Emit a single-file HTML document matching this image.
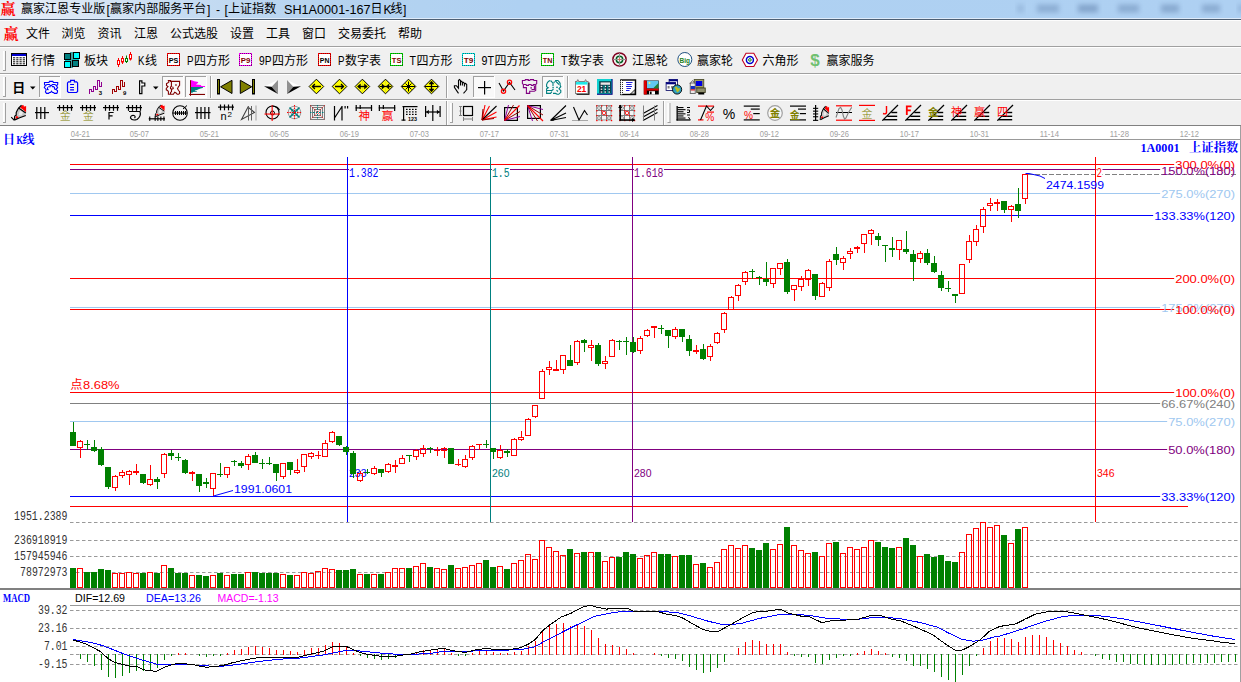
<!DOCTYPE html>
<html><head><meta charset="utf-8"><title>chart</title>
<style>
html,body{margin:0;padding:0;background:#f0f0f0;overflow:hidden}
body{width:1241px;height:682px;position:relative;font-family:"Liberation Sans",sans-serif}
svg text{white-space:pre}
</style></head><body>
<svg id="titlebar" width="1241" height="21" viewBox="0 0 1241 21" style="position:absolute;left:0;top:0"><defs><linearGradient id="tg" x1="0" x2="1" y1="0" y2="0"><stop offset="0" stop-color="#e8eff8"/><stop offset="0.06" stop-color="#dbe7f5"/><stop offset="0.15" stop-color="#c6dcf2"/><stop offset="0.26" stop-color="#b5d3f0"/><stop offset="0.42" stop-color="#afd1f2"/><stop offset="1" stop-color="#aed0f2"/></linearGradient><filter id="blur" x="-20%" y="-50%" width="140%" height="200%"><feGaussianBlur stdDeviation="2.6"/></filter></defs><rect x="0" y="0" width="1241" height="19" fill="url(#tg)"/><rect x="1017" y="4.5" width="7" height="8" fill="#5a7aa6" opacity="0.25" filter="url(#blur)"/><rect x="1037" y="4.5" width="22" height="8" fill="#5a7aa6" opacity="0.4" filter="url(#blur)"/><rect x="1078" y="4.5" width="20" height="8" fill="#5a7aa6" opacity="0.5" filter="url(#blur)"/><rect x="1118" y="4.5" width="21" height="8" fill="#5a7aa6" opacity="0.42" filter="url(#blur)"/><rect x="1161" y="4.5" width="18" height="8" fill="#5a7aa6" opacity="0.45" filter="url(#blur)"/><rect x="1202" y="4.5" width="18" height="8" fill="#5a7aa6" opacity="0.42" filter="url(#blur)"/><rect x="1238" y="4.5" width="6" height="8" fill="#5a7aa6" opacity="0.3" filter="url(#blur)"/><rect x="0" y="18" width="1241" height="1" fill="#deebfa"/><rect x="0" y="19" width="1241" height="1" fill="#4e5f73"/><rect x="0" y="20" width="1241" height="1" fill="#fdfdfd"/><text x="0.5" y="14" font-size="15" fill="#ff0000" text-anchor="start" font-family="Liberation Serif, Noto Serif CJK SC, serif" font-weight="bold">赢</text><text x="21" y="13.4" font-size="12" fill="#000" text-anchor="start" font-family="Liberation Sans, Noto Sans CJK SC, sans-serif" textLength="84.3" lengthAdjust="spacingAndGlyphs">赢家江恩专业版</text><text x="106.5" y="13.5" font-size="12.2" fill="#000" text-anchor="start" font-family="Liberation Sans, sans-serif">[</text><text x="110" y="13.4" font-size="12" fill="#000" text-anchor="start" font-family="Liberation Sans, Noto Sans CJK SC, sans-serif" textLength="96.4" lengthAdjust="spacingAndGlyphs">赢家内部服务平台</text><text x="207" y="13.5" font-size="12.2" fill="#000" text-anchor="start" font-family="Liberation Sans, sans-serif">]</text><text x="216" y="13.5" font-size="12.2" fill="#000" text-anchor="start" font-family="Liberation Sans, sans-serif">-</text><text x="224.5" y="13.5" font-size="12.2" fill="#000" text-anchor="start" font-family="Liberation Sans, sans-serif">[</text><text x="228" y="13.4" font-size="12" fill="#000" text-anchor="start" font-family="Liberation Sans, Noto Sans CJK SC, sans-serif" textLength="48.2" lengthAdjust="spacingAndGlyphs">上证指数</text><text x="284" y="13.5" font-size="12.2" fill="#000" text-anchor="start" font-family="Liberation Sans, sans-serif" textLength="86.5" lengthAdjust="spacingAndGlyphs">SH1A0001-167</text><text x="370.5" y="13.4" font-size="12" fill="#000" text-anchor="start" font-family="Liberation Sans, Noto Sans CJK SC, sans-serif">日</text><text x="383.5" y="13.5" font-size="12.2" fill="#000" text-anchor="start" font-family="Liberation Sans, sans-serif">K</text><text x="390.5" y="13.4" font-size="12" fill="#000" text-anchor="start" font-family="Liberation Sans, Noto Sans CJK SC, sans-serif">线</text><text x="403" y="13.5" font-size="12.2" fill="#000" text-anchor="start" font-family="Liberation Sans, sans-serif">]</text></svg><svg id="menubar" width="1241" height="27" viewBox="0 21 1241 27" style="position:absolute;left:0;top:21px"><rect x="0" y="21" width="1241" height="25" fill="#f0f0f0"/><rect x="0" y="46" width="1241" height="1" fill="#a0a0a0"/><rect x="0" y="47" width="1241" height="1" fill="#fff"/><text x="3.5" y="38.8" font-size="15" fill="#ff0000" text-anchor="start" font-family="Liberation Serif, Noto Serif CJK SC, serif" font-weight="bold">赢</text><text x="26" y="38.2" font-size="12" fill="#000" text-anchor="start" font-family="Liberation Sans, Noto Sans CJK SC, sans-serif" textLength="24" lengthAdjust="spacingAndGlyphs">文件</text><text x="61.5" y="38.2" font-size="12" fill="#000" text-anchor="start" font-family="Liberation Sans, Noto Sans CJK SC, sans-serif" textLength="24" lengthAdjust="spacingAndGlyphs">浏览</text><text x="97.5" y="38.2" font-size="12" fill="#000" text-anchor="start" font-family="Liberation Sans, Noto Sans CJK SC, sans-serif" textLength="24" lengthAdjust="spacingAndGlyphs">资讯</text><text x="134" y="38.2" font-size="12" fill="#000" text-anchor="start" font-family="Liberation Sans, Noto Sans CJK SC, sans-serif" textLength="24" lengthAdjust="spacingAndGlyphs">江恩</text><text x="170" y="38.2" font-size="12" fill="#000" text-anchor="start" font-family="Liberation Sans, Noto Sans CJK SC, sans-serif" textLength="48" lengthAdjust="spacingAndGlyphs">公式选股</text><text x="230" y="38.2" font-size="12" fill="#000" text-anchor="start" font-family="Liberation Sans, Noto Sans CJK SC, sans-serif" textLength="24" lengthAdjust="spacingAndGlyphs">设置</text><text x="266" y="38.2" font-size="12" fill="#000" text-anchor="start" font-family="Liberation Sans, Noto Sans CJK SC, sans-serif" textLength="24" lengthAdjust="spacingAndGlyphs">工具</text><text x="302" y="38.2" font-size="12" fill="#000" text-anchor="start" font-family="Liberation Sans, Noto Sans CJK SC, sans-serif" textLength="24" lengthAdjust="spacingAndGlyphs">窗口</text><text x="338" y="38.2" font-size="12" fill="#000" text-anchor="start" font-family="Liberation Sans, Noto Sans CJK SC, sans-serif" textLength="48" lengthAdjust="spacingAndGlyphs">交易委托</text><text x="398" y="38.2" font-size="12" fill="#000" text-anchor="start" font-family="Liberation Sans, Noto Sans CJK SC, sans-serif" textLength="24" lengthAdjust="spacingAndGlyphs">帮助</text></svg><svg id="toolbar1" width="1241" height="27" viewBox="0 48 1241 27" style="position:absolute;left:0;top:48px"><rect x="0" y="48" width="1241" height="25" fill="#f0f0f0"/><rect x="0" y="73" width="1241" height="1" fill="#a0a0a0"/><rect x="0" y="74" width="1241" height="1" fill="#fff"/><rect x="3" y="51" width="3" height="20" fill="#f8f8f8"/><rect x="3" y="51" width="1" height="20" fill="#fff"/><rect x="5" y="51" width="1" height="20" fill="#a0a0a0"/><rect x="3" y="70" width="3" height="1" fill="#a0a0a0"/><rect x="11.5" y="53.5" width="15" height="12" fill="#fff" stroke="#000"/><rect x="12" y="54" width="14" height="2" fill="#0000d0"/><rect x="13.0" y="57.3" width="2.2" height="1" fill="#000"/><rect x="16.25" y="57.3" width="2.2" height="1" fill="#000"/><rect x="19.5" y="57.3" width="2.2" height="1" fill="#000"/><rect x="22.75" y="57.3" width="2.2" height="1" fill="#000"/><rect x="13.0" y="59.3" width="2.2" height="1" fill="#000"/><rect x="16.25" y="59.3" width="2.2" height="1" fill="#000"/><rect x="19.5" y="59.3" width="2.2" height="1" fill="#000"/><rect x="22.75" y="59.3" width="2.2" height="1" fill="#000"/><rect x="13.0" y="61.3" width="2.2" height="1" fill="#000"/><rect x="16.25" y="61.3" width="2.2" height="1" fill="#000"/><rect x="19.5" y="61.3" width="2.2" height="1" fill="#000"/><rect x="22.75" y="61.3" width="2.2" height="1" fill="#000"/><rect x="13.0" y="63.3" width="2.2" height="1" fill="#000"/><rect x="16.25" y="63.3" width="2.2" height="1" fill="#000"/><rect x="19.5" y="63.3" width="2.2" height="1" fill="#000"/><rect x="22.75" y="63.3" width="2.2" height="1" fill="#000"/><rect x="65" y="53" width="14" height="14" fill="#00c8c8"/><rect x="70" y="52" width="3" height="16" fill="#40a0a0"/><rect x="64.5" y="53.5" width="6" height="6" fill="#008080" stroke="#000"/><rect x="73.5" y="52.5" width="6" height="6" fill="#00ffff" stroke="#000"/><rect x="64.5" y="61.5" width="6" height="6" fill="#00ffff" stroke="#000"/><rect x="72.5" y="60.5" width="6" height="6" fill="#008080" stroke="#000"/><rect x="118" y="58" width="1" height="9" fill="#f00"/><rect x="117.5" y="60.5" width="2" height="4" fill="#fff" stroke="#f00"/><rect x="122" y="56" width="1" height="8" fill="#f00"/><rect x="121.5" y="58.5" width="2" height="3.5" fill="#fff" stroke="#f00"/><rect x="126" y="55.5" width="1" height="7.5" fill="#008000"/><rect x="125.5" y="58.5" width="2" height="3" fill="#fff" stroke="#008000"/><rect x="130" y="52" width="1" height="8.5" fill="#f00"/><rect x="129.5" y="54.5" width="2" height="4.5" fill="#fff" stroke="#f00"/><rect x="167.5" y="53.5" width="12" height="12" fill="#fff" stroke="#ff0000" shape-rendering="crispEdges"/><rect x="167.5" y="53.5" width="12" height="12" fill="none" stroke="#900000" stroke-dasharray="1 1" shape-rendering="crispEdges"/><text x="173.6" y="62.6" font-size="8" fill="#000" text-anchor="middle" font-family="Liberation Sans, sans-serif" font-weight="bold" textLength="9.6" lengthAdjust="spacingAndGlyphs">PS</text><rect x="239.5" y="53.5" width="12" height="12" fill="#fff" stroke="#ff00ff" shape-rendering="crispEdges"/><rect x="239.5" y="53.5" width="12" height="12" fill="none" stroke="#800080" stroke-dasharray="1 1" shape-rendering="crispEdges"/><text x="245.6" y="62.6" font-size="8" fill="#800000" text-anchor="middle" font-family="Liberation Sans, sans-serif" font-weight="bold" textLength="9.6" lengthAdjust="spacingAndGlyphs">P9</text><rect x="318.5" y="53.5" width="12" height="12" fill="#fff" stroke="#ff0000" shape-rendering="crispEdges"/><rect x="318.5" y="53.5" width="12" height="12" fill="none" stroke="#900000" stroke-dasharray="1 1" shape-rendering="crispEdges"/><text x="324.6" y="62.6" font-size="8" fill="#000" text-anchor="middle" font-family="Liberation Sans, sans-serif" font-weight="bold" textLength="9.6" lengthAdjust="spacingAndGlyphs">PN</text><rect x="390.5" y="53.5" width="12" height="12" fill="#fff" stroke="#00e000" shape-rendering="crispEdges"/><rect x="390.5" y="53.5" width="12" height="12" fill="none" stroke="#008000" stroke-dasharray="1 1" shape-rendering="crispEdges"/><text x="396.6" y="62.6" font-size="8" fill="#800000" text-anchor="middle" font-family="Liberation Sans, sans-serif" font-weight="bold" textLength="9.6" lengthAdjust="spacingAndGlyphs">TS</text><rect x="462.5" y="53.5" width="12" height="12" fill="#fff" stroke="#00e0e0" shape-rendering="crispEdges"/><rect x="462.5" y="53.5" width="12" height="12" fill="none" stroke="#008080" stroke-dasharray="1 1" shape-rendering="crispEdges"/><text x="468.6" y="62.6" font-size="8" fill="#800000" text-anchor="middle" font-family="Liberation Sans, sans-serif" font-weight="bold" textLength="9.6" lengthAdjust="spacingAndGlyphs">T9</text><rect x="541.5" y="53.5" width="12" height="12" fill="#fff" stroke="#00e000" shape-rendering="crispEdges"/><rect x="541.5" y="53.5" width="12" height="12" fill="none" stroke="#008000" stroke-dasharray="1 1" shape-rendering="crispEdges"/><text x="547.6" y="62.6" font-size="8" fill="#800000" text-anchor="middle" font-family="Liberation Sans, sans-serif" font-weight="bold" textLength="9.6" lengthAdjust="spacingAndGlyphs">TN</text><circle cx="619.5" cy="59.5" r="6.6" stroke="#800020" fill="#f4f0f0" stroke-width="1.5"/><circle cx="619.5" cy="59.5" r="3.2" stroke="#006020" fill="#fff" stroke-width="1.5"/><rect x="613.0" y="59.0" width="13" height="1" fill="#909090"/><rect x="619.0" y="53.0" width="1" height="13" fill="#909090"/><circle cx="619.5" cy="59.5" r="1" stroke="none" fill="#ff6040" stroke-width="1"/><circle cx="684.8" cy="59.5" r="7" stroke="#205080" fill="#fff" stroke-width="1"/><text x="684.8" y="62.5" font-size="8" fill="#208020" text-anchor="middle" font-family="Liberation Sans, sans-serif" font-weight="bold" textLength="10.5" lengthAdjust="spacingAndGlyphs">Big</text><path d="M742.3,59.9 L746.0,53.3 L753.8,53.3 L757.5,59.9 L753.8,66.5 L746.0,66.5 Z" stroke="#c00020" fill="#fff" stroke-width="1.1"/><circle cx="749.9" cy="59.9" r="3.5" stroke="#0000d0" fill="#fff" stroke-width="1.5"/><circle cx="749.9" cy="59.9" r="1.3" stroke="#008000" fill="#fff" stroke-width="1"/><text x="815" y="66" font-size="17" fill="#70c070" text-anchor="middle" font-family="Liberation Sans, sans-serif" font-weight="bold">$</text><text x="31" y="65" font-size="12" fill="#000" text-anchor="start" font-family="Liberation Sans, Noto Sans CJK SC, sans-serif" textLength="24" lengthAdjust="spacingAndGlyphs">行情</text><text x="84" y="65" font-size="12" fill="#000" text-anchor="start" font-family="Liberation Sans, Noto Sans CJK SC, sans-serif" textLength="24" lengthAdjust="spacingAndGlyphs">板块</text><text x="138" y="65.3" font-size="12" fill="#000" text-anchor="start" font-family="Liberation Sans, sans-serif" textLength="6.5" lengthAdjust="spacingAndGlyphs">K</text><text x="145" y="65" font-size="12" fill="#000" text-anchor="start" font-family="Liberation Sans, Noto Sans CJK SC, sans-serif">线</text><text x="187" y="65.3" font-size="12" fill="#000" text-anchor="start" font-family="Liberation Sans, sans-serif" textLength="6.5" lengthAdjust="spacingAndGlyphs">P</text><text x="194" y="65" font-size="12" fill="#000" text-anchor="start" font-family="Liberation Sans, Noto Sans CJK SC, sans-serif" textLength="36" lengthAdjust="spacingAndGlyphs">四方形</text><text x="259" y="65.3" font-size="12" fill="#000" text-anchor="start" font-family="Liberation Sans, sans-serif" textLength="12.5" lengthAdjust="spacingAndGlyphs">9P</text><text x="272" y="65" font-size="12" fill="#000" text-anchor="start" font-family="Liberation Sans, Noto Sans CJK SC, sans-serif" textLength="36" lengthAdjust="spacingAndGlyphs">四方形</text><text x="338" y="65.3" font-size="12" fill="#000" text-anchor="start" font-family="Liberation Sans, sans-serif" textLength="6.5" lengthAdjust="spacingAndGlyphs">P</text><text x="345" y="65" font-size="12" fill="#000" text-anchor="start" font-family="Liberation Sans, Noto Sans CJK SC, sans-serif" textLength="36" lengthAdjust="spacingAndGlyphs">数字表</text><text x="409.5" y="65.3" font-size="12" fill="#000" text-anchor="start" font-family="Liberation Sans, sans-serif" textLength="6.5" lengthAdjust="spacingAndGlyphs">T</text><text x="416.5" y="65" font-size="12" fill="#000" text-anchor="start" font-family="Liberation Sans, Noto Sans CJK SC, sans-serif" textLength="36" lengthAdjust="spacingAndGlyphs">四方形</text><text x="481.5" y="65.3" font-size="12" fill="#000" text-anchor="start" font-family="Liberation Sans, sans-serif" textLength="12.5" lengthAdjust="spacingAndGlyphs">9T</text><text x="494.5" y="65" font-size="12" fill="#000" text-anchor="start" font-family="Liberation Sans, Noto Sans CJK SC, sans-serif" textLength="36" lengthAdjust="spacingAndGlyphs">四方形</text><text x="561" y="65.3" font-size="12" fill="#000" text-anchor="start" font-family="Liberation Sans, sans-serif" textLength="6.5" lengthAdjust="spacingAndGlyphs">T</text><text x="568" y="65" font-size="12" fill="#000" text-anchor="start" font-family="Liberation Sans, Noto Sans CJK SC, sans-serif" textLength="36" lengthAdjust="spacingAndGlyphs">数字表</text><text x="632" y="65" font-size="12" fill="#000" text-anchor="start" font-family="Liberation Sans, Noto Sans CJK SC, sans-serif" textLength="36" lengthAdjust="spacingAndGlyphs">江恩轮</text><text x="697" y="65" font-size="12" fill="#000" text-anchor="start" font-family="Liberation Sans, Noto Sans CJK SC, sans-serif" textLength="36" lengthAdjust="spacingAndGlyphs">赢家轮</text><text x="762.5" y="65" font-size="12" fill="#000" text-anchor="start" font-family="Liberation Sans, Noto Sans CJK SC, sans-serif" textLength="36" lengthAdjust="spacingAndGlyphs">六角形</text><text x="826.5" y="65" font-size="12" fill="#000" text-anchor="start" font-family="Liberation Sans, Noto Sans CJK SC, sans-serif" textLength="48" lengthAdjust="spacingAndGlyphs">赢家服务</text></svg><svg id="toolbar2" width="1241" height="26" viewBox="0 75 1241 26" style="position:absolute;left:0;top:75px"><rect x="0" y="75" width="1241" height="24" fill="#f0f0f0"/><rect x="0" y="99" width="1241" height="1" fill="#a0a0a0"/><rect x="0" y="100" width="1241" height="1" fill="#fff"/><rect x="3" y="77" width="3" height="20" fill="#f8f8f8"/><rect x="3" y="77" width="1" height="20" fill="#fff"/><rect x="5" y="77" width="1" height="20" fill="#a0a0a0"/><rect x="3" y="96" width="3" height="1" fill="#a0a0a0"/><text x="12.3" y="92.3" font-size="13" fill="#000" text-anchor="start" font-family="Liberation Sans, Noto Sans CJK SC, sans-serif" font-weight="bold">日</text><path d="M30,86.5 H35.5 L32.75,89.5 Z" stroke="none" fill="#000" stroke-width="1"/><rect x="39" y="76" width="22" height="22" fill="#f9f9f9"/><rect x="39" y="76" width="22" height="1" fill="#a0a0a0"/><rect x="39" y="76" width="1" height="22" fill="#a0a0a0"/><rect x="39" y="97" width="22" height="1" fill="#fff"/><rect x="60" y="76" width="1" height="22" fill="#fff"/><path d="M44.5,82.5 H48.9 L49.5,81.4 H52.8 L53.4,82.5 H57.7 V84.4 L56.6,85.9 L57.6,87.7 L55.7,89.5 L57.5,90.5 V91.8 L56.8,93.4 H54.3 L53.6,92.5 H52.5 L51.5,91.2 L50.5,92.5 H49.3 L48.7,93.4 H46.5 L45.4,91.8 L46.2,89.6 L44.3,87.5 L45.4,85.6 L44.5,84.4 Z" stroke="#0000ff" fill="none" stroke-width="1.1"/><path d="M45.6,85.6 Q46.5,84.5 47.3,84.5 H49.4 L50.4,85.6 H51.6 L52.3,84.5 H54.8 Q56,85 56.6,86 M48.2,86.7 H50.6 M47.5,87.3 V89.5 L48.6,89.6 M52,86.6 H53.5 L54.5,87.5 V89 L55.5,89.5" stroke="#0000ff" fill="none" stroke-width="1.1"/><path d="M68.5,81.9 H70.6 V80.4 H74.4 V81.9 H76.6 L77.6,82.9 V91.5 L76.6,92.5 H68.5 L67.5,91.5 V82.9 Z" stroke="#0000ff" fill="none" stroke-width="1.2"/><path d="M70.1,84.5 H74 M70.1,87.5 H74 M70.1,89.8 H74" stroke="#0000ff" fill="none" stroke-width="1.2"/><path d="M89.5,94 V89.5 H91.5 V91.5 H93.5 V86.5 H95.5 V89.5 H97.5 V80.5 H99.5 V86.5 H101.5 V82" stroke="#900090" fill="none" stroke-width="1" shape-rendering="crispEdges"/><text x="100.3" y="94.8" font-size="6" fill="#000" text-anchor="middle" font-family="Liberation Sans, sans-serif" font-weight="bold">3</text><path d="M112.5,94 V89.5 H114.5 V91.5 H116.5 V86.5 H118.5 V89.5 H120.5 V80.5 H122.5 V86.5 H124.5 V82" stroke="#a00000" fill="none" stroke-width="1" shape-rendering="crispEdges"/><text x="124.6" y="94.8" font-size="6" fill="#000" text-anchor="middle" font-family="Liberation Sans, sans-serif" font-weight="bold">9</text><path d="M139.6,80.8 H141.9 V83 H144.8 V86 H141.9 V93.7 H139.6 Z" stroke="#000" fill="#fff" stroke-width="1.2"/><path d="M153,86.5 H158.5 L155.75,89.5 Z" stroke="none" fill="#000" stroke-width="1"/><rect x="162" y="76" width="22" height="22" fill="#f9f9f9"/><rect x="162" y="76" width="22" height="1" fill="#a0a0a0"/><rect x="162" y="76" width="1" height="22" fill="#a0a0a0"/><rect x="162" y="97" width="22" height="1" fill="#fff"/><rect x="183" y="76" width="1" height="22" fill="#fff"/><path d="M168.4,80.5 H170.6 V81.4 H179.6 V85.4 L178.5,86.6 L177.5,88.8 L178.6,90.5 L179.6,91.6 V93.4 L178.6,94.3 H177.2 L176.1,93 L174.7,92.3 L173.4,94.3 H168.4 V91.6 L167.6,90.5 L166.3,89.8 V88.4 L168,86.6 L166.5,85.4 V83.6 L167.6,83.1 L169,81.9 Z" stroke="#800000" fill="none" stroke-width="1.1"/><path d="M171.4,81.4 V86.4 L170.5,87 V88.6 L171.5,89 V91.6 L170.5,92.7 V94 M172.6,86.6 L173.3,88.4 L172.2,89.2" stroke="#800000" fill="none" stroke-width="1.1"/><rect x="175.2" y="84.3" width="1.5" height="1.4" fill="#800000"/><rect x="185" y="76" width="22" height="22" fill="#f9f9f9"/><rect x="185" y="76" width="22" height="1" fill="#a0a0a0"/><rect x="185" y="76" width="1" height="22" fill="#a0a0a0"/><rect x="185" y="97" width="22" height="1" fill="#fff"/><rect x="206" y="76" width="1" height="22" fill="#fff"/><path d="M191,80.1 L192.4,80.6 L194.2,81.3 L198.1,82 V82.7 L196,84.5 L201,85 L201.3,85.9 L205,86.1 V86.9 L191,87.1 Z" stroke="none" fill="#ff00ff" stroke-width="1"/><path d="M191,87.1 H203.1 L202.7,87.9 L200.6,88.4 L198.5,89.3 L197,90 L194.9,90.5 V91.1 L197,91.2 V91.8 L193.1,92.1 L192.4,92.7 H191 Z" stroke="none" fill="#008080" stroke-width="1"/><rect x="190" y="80.2" width="1" height="15.6" fill="#800000"/><rect x="189.2" y="93.9" width="15.8" height="1.1" fill="#800000"/><rect x="210" y="76" width="1" height="22" fill="#a0a0a0"/><rect x="211" y="76" width="1" height="22" fill="#fff"/><rect x="217.5" y="79.5" width="2" height="14.5" fill="#808000" stroke="#000"/><path d="M232,80.3 L220.6,86.8 L232,93.5 Z" stroke="#000" fill="#808000" stroke-width="1"/><path d="M240.3,80.3 L251.7,86.8 L240.3,93.5 Z" stroke="#000" fill="#808000" stroke-width="1"/><rect x="252.5" y="79.5" width="2" height="14.5" fill="#808000" stroke="#000"/><path d="M278,80 L264,86.5 L271.5,87 Z" stroke="none" fill="#fff" stroke-width="1"/><path d="M278,80 L271.5,87 L278,93.8 Z" stroke="none" fill="#909090" stroke-width="1"/><path d="M264,86.3 L278,94 L271.5,86.8 Z" stroke="none" fill="#000" stroke-width="1"/><path d="M287,80 L301,86.5 L293.5,87 Z" stroke="none" fill="#fff" stroke-width="1"/><path d="M287,80 L293.5,87 L287,93.8 Z" stroke="none" fill="#909090" stroke-width="1"/><path d="M301,86.3 L287,94 L293.5,86.8 Z" stroke="none" fill="#000" stroke-width="1"/><path d="M309.09999999999997,86.5 L316.4,79.2 L323.7,86.5 L316.4,93.8 Z" stroke="#000" fill="#ffff00" stroke-width="1"/><path d="M312.4,86.5 H320.9 M314.9,84.0 L312.4,86.5 L314.9,89.0" stroke="#000" fill="none" stroke-width="1.3"/><path d="M332.2,86.5 L339.5,79.2 L346.8,86.5 L339.5,93.8 Z" stroke="#000" fill="#ffff00" stroke-width="1"/><path d="M335.0,86.5 H343.5 M341.0,84.0 L343.5,86.5 L341.0,89.0" stroke="#000" fill="none" stroke-width="1.3"/><path d="M355.09999999999997,86.5 L362.4,79.2 L369.7,86.5 L362.4,93.8 Z" stroke="#000" fill="#ffff00" stroke-width="1"/><path d="M362.4,80.5 V92.5" stroke="#c0c060" fill="none" stroke-width="1" stroke-dasharray="1 1"/><path d="M357.9,86.5 H366.9" stroke="#000" fill="none" stroke-width="1.3"/><path d="M360.4,84.0 L357.4,86.5 L360.4,89.0 Z M364.4,84.0 L367.4,86.5 L364.4,89.0 Z" stroke="#000" fill="#000" stroke-width="0.5"/><path d="M378.2,86.5 L385.5,79.2 L392.8,86.5 L385.5,93.8 Z" stroke="#000" fill="#ffff00" stroke-width="1"/><path d="M385.5,80.5 V92.5" stroke="#c0c060" fill="none" stroke-width="1" stroke-dasharray="1 1"/><path d="M379.5,86.5 H391.5" stroke="#000" fill="none" stroke-width="1"/><path d="M382.0,84.0 L385.0,86.5 L382.0,89.0 Z M389.0,84.0 L386.0,86.5 L389.0,89.0 Z" stroke="#000" fill="#000" stroke-width="0.5"/><path d="M401.2,86.5 L408.5,79.2 L415.8,86.5 L408.5,93.8 Z" stroke="#000" fill="#ffff00" stroke-width="1"/><path d="M402.0,86.5 H415.0 M408.5,81.5 V91.5 M405.5,83.5 L411.5,89.5 M411.5,83.5 L405.5,89.5" stroke="#000" fill="none" stroke-width="1"/><path d="M424.2,86.5 L431.5,79.2 L438.8,86.5 L431.5,93.8 Z" stroke="#000" fill="#ffff00" stroke-width="1"/><path d="M425.0,86.5 H438.0" stroke="#000" fill="none" stroke-width="1"/><path d="M431.5,82.0 V91.0" stroke="#000" fill="none" stroke-width="1.3"/><path d="M429.0,84.0 L431.5,81.0 L434.0,84.0 Z M429.0,89.0 L431.5,92.0 L434.0,89.0 Z" stroke="#000" fill="#000" stroke-width="0.5"/><rect x="446" y="76" width="1" height="22" fill="#a0a0a0"/><rect x="447" y="76" width="1" height="22" fill="#fff"/><path d="M458.5,93.4 L454.4,87.4 V85.7 H456.4 L458.5,88.2 V80.4 L459.4,79.5 L460.5,80.4 V85.6 M460.8,81.4 H461.8 L462.4,82.7 V85.6 M462.7,82.5 L463.6,82.4 L464.4,83.6 V86.6 M464.7,83.6 L465.5,83.4 L466.7,84.6 V89.5 L465.6,91 L463.5,93.4" stroke="#000" fill="none" stroke-width="1.1"/><rect x="473" y="76" width="22" height="22" fill="#f9f9f9"/><rect x="473" y="76" width="22" height="1" fill="#a0a0a0"/><rect x="473" y="76" width="1" height="22" fill="#a0a0a0"/><rect x="473" y="97" width="22" height="1" fill="#fff"/><rect x="494" y="76" width="1" height="22" fill="#fff"/><rect x="478" y="87" width="13" height="1.2" fill="#000"/><rect x="484" y="81" width="1.2" height="13.5" fill="#000"/><path d="M499,83 L503.5,91 L509.5,82.5 L515,90" stroke="#000" fill="none" stroke-width="1.1"/><circle cx="503.5" cy="91.3" r="2.1" stroke="#ff0000" fill="none" stroke-width="1.3"/><circle cx="509.5" cy="82.3" r="2.1" stroke="#ff0000" fill="none" stroke-width="1.3"/><path d="M522.4,80.5 H525 L525.4,79.6 H528.3 V80.5 H529.7 L530.3,79.6 H533.5 L533.9,80.5 H536.7 V83.6 L535.7,84.5 V90.5 L534.3,91.3 H529.7 V93.4 H526.4 V87.6 H523.4 V84.5 L522.4,83.6 Z" stroke="#800080" fill="none" stroke-width="1.1"/><path d="M523.9,84.5 H526 L526.4,85.4 H528.5 L528.9,84.5 H531 L531.4,85.4 H533.1 L533.5,84.5 H535.6 M534.4,85.6 V89.5 H531.5" stroke="#800080" fill="none" stroke-width="1.1"/><rect x="530.4" y="87.2" width="1.5" height="1.4" fill="#800080"/><rect x="542" y="76" width="22" height="22" fill="#f9f9f9"/><rect x="542" y="76" width="22" height="1" fill="#a0a0a0"/><rect x="542" y="76" width="1" height="22" fill="#a0a0a0"/><rect x="542" y="97" width="22" height="1" fill="#fff"/><rect x="563" y="76" width="1" height="22" fill="#fff"/><path d="M550,80.5 L548.4,81.4 L547.3,82.8 L546.6,84.5 V86.6 L548.3,87.7 L546.6,88.9 V93.4 H550.5 L551.9,91.6 M547,90.5 H551.9 L553.5,89.2 M550.6,80.5 L552,82 L553,83.2 V86.3 M552.2,87.8 H554" stroke="#008080" fill="none" stroke-width="1.1"/><path d="M555.1,80.5 H557.9 L559,81.7 L560.1,83.1 V85.2 L560.8,86.6 L559,88.8 L560.8,90.5 V92.3 L558.7,94.3 H557.2 L555.5,93.4 H553 M555.1,80.6 L559,84.5 M554.5,81.5 L553.8,83 M556,87.3 H558 M556.5,90.3 L558,91.5" stroke="#008080" fill="none" stroke-width="1.1"/><rect x="567" y="76" width="1" height="22" fill="#a0a0a0"/><rect x="568" y="76" width="1" height="22" fill="#fff"/><rect x="576.5" y="82.5" width="13" height="12.3" fill="#000"/><rect x="575.5" y="81.5" width="12.5" height="12" fill="#fff" stroke="#808080"/><rect x="576" y="82" width="11.5" height="2.6" fill="#20e8e8"/><path d="M576.8,81.5 L577.8,79.6 L578.8,81.5 M584.6,81.5 L585.6,79.6 L586.6,81.5" stroke="#707070" fill="#fff" stroke-width="0.9"/><text x="581.6" y="92.2" font-size="9.3" fill="#ff0000" text-anchor="middle" font-family="Liberation Sans, sans-serif" font-weight="bold" textLength="9.4" lengthAdjust="spacingAndGlyphs">21</text><rect x="597" y="79" width="15.6" height="15.8" fill="#000080"/><rect x="597" y="79" width="14.4" height="14.6" fill="#10d0d0"/><rect x="599" y="81" width="12.4" height="12.6" fill="#008080"/><rect x="599.6" y="81.6" width="11.2" height="11.4" fill="#103040"/><rect x="600.6" y="82.4" width="9.4" height="2.4" fill="#e8e8e8"/><rect x="600.7" y="85.8" width="1.6" height="1.3" fill="#f0f0f0"/><rect x="604.5" y="85.8" width="1.6" height="1.3" fill="#f0f0f0"/><rect x="608.3000000000001" y="85.8" width="1.6" height="1.3" fill="#f0f0f0"/><rect x="603.2" y="85.2" width="1.6" height="8" fill="#008080"/><rect x="600.7" y="88.6" width="1.6" height="1.3" fill="#f0f0f0"/><rect x="604.5" y="88.6" width="1.6" height="1.3" fill="#f0f0f0"/><rect x="608.3000000000001" y="88.6" width="1.6" height="1.3" fill="#f0f0f0"/><rect x="600.7" y="91.39999999999999" width="1.6" height="1.3" fill="#f0f0f0"/><rect x="604.5" y="91.39999999999999" width="1.6" height="1.3" fill="#f0f0f0"/><rect x="608.3000000000001" y="91.39999999999999" width="1.6" height="1.3" fill="#f0f0f0"/><rect x="606.9" y="85.2" width="1.4" height="8" fill="#008080"/><rect x="621" y="80" width="14.5" height="14.5" fill="#fff" stroke="#000" stroke-width="1.4"/><rect x="620.5" y="80" width="2" height="14.5" fill="#fff" stroke="#000" stroke-width="0.8" stroke-dasharray="1 1"/><path d="M626,82.5 H632.5 M626.5,84.5 H631.5 M626,86.5 H632 M626.5,88.5 H631 M626,90.5 H629.5" stroke="#2020e0" fill="none" stroke-width="1.1"/><path d="M630.5,94 L635,89.5 V94 Z" stroke="#000" fill="#d0d0d0" stroke-width="0.8"/><rect x="643.8" y="80.5" width="15" height="14" fill="#000"/><rect x="643.8" y="80.5" width="3" height="14" fill="#e00000"/><rect x="647" y="80.8" width="11.4" height="7.6" fill="#60c8f0"/><path d="M653,88.4 L658.4,83 V88.4 Z" stroke="none" fill="#208030" stroke-width="1"/><circle cx="649.5" cy="83" r="1" stroke="none" fill="#fff060" stroke-width="1"/><rect x="646.8" y="88.6" width="11.8" height="2" fill="#e00000"/><rect x="649" y="91.2" width="6" height="3.3" fill="#fff"/><rect x="649.8" y="91.6" width="1.8" height="2.6" fill="#000"/><rect x="669.1" y="79.5" width="8.5" height="7" fill="#fff" stroke="#000060" stroke-width="0.8"/><rect x="669.1" y="79.5" width="8.5" height="1.8" fill="#000080"/><rect x="666.1" y="82.5" width="9.5" height="8" fill="#fff" stroke="#000060" stroke-width="0.8"/><rect x="666.1" y="82.5" width="9.5" height="1.8" fill="#000080"/><rect x="667.6" y="86" width="2" height="2.5" fill="#808080"/><rect x="671.1" y="86" width="2" height="2.5" fill="#808080"/><circle cx="677.1" cy="89.5" r="4.6" stroke="#000" fill="#30a0c0" stroke-width="0.9"/><path d="M674.6,87.5 L676.6,86.5 L678.1,88.5 L680.1,88 L679.1,91 L677.1,92.5 L676.1,90 Z" stroke="none" fill="#c0c020" stroke-width="1"/><rect x="694.25" y="79.5" width="9.5" height="8.5" fill="#a0a060" stroke="#505030" stroke-width="0.9"/><rect x="695.75" y="81" width="6.5" height="5" fill="#0000e0"/><rect x="696.75" y="88" width="8.5" height="4.5" fill="#909070" stroke="#404020" stroke-width="0.9"/><rect x="698.25" y="92.5" width="6" height="2" fill="#000"/><rect x="690.25" y="83" width="5" height="10.5" fill="#e8e8e8" stroke="#606060" stroke-width="0.9"/><rect x="690.75" y="86" width="4.2" height="3.2" fill="#1030c0"/><rect x="690.75" y="89.2" width="4.2" height="1.3" fill="#e02020"/><path d="M689.75,84 L692.55,80.5 L695.55,84" stroke="#606060" fill="none" stroke-width="0.9"/></svg><svg id="toolbar3" width="1241" height="25" viewBox="0 101 1241 25" style="position:absolute;left:0;top:101px"><rect x="0" y="101" width="1241" height="24" fill="#f0f0f0"/><rect x="0" y="125" width="1241" height="1" fill="#808080"/><rect x="3" y="103" width="3" height="20" fill="#f8f8f8"/><rect x="3" y="103" width="1" height="20" fill="#fff"/><rect x="5" y="103" width="1" height="20" fill="#a0a0a0"/><rect x="3" y="122" width="3" height="1" fill="#a0a0a0"/><polygon points="18.6,108.4 25.6,113.2 25.6,115.6 19.7,117.4 16.7,116.4 16.3,112.6" fill="#c4c4c4"/><polygon points="20.0,110.5 23.0,112.5 21.5,115.5 18.5,115.0" fill="#ececec"/><polygon points="20.1,107.7 21.8,105.2 23.6,105.0 23.6,106.3 24.7,106.6 26.1,105.9 26.1,112.3 22.2,109.1" fill="#ff0000"/><polygon points="15.1,118.5 16.5,115.8 18.8,117.2 17.2,118.5" fill="#ff0000"/><polyline points="21.5,105.2 18.6,108.0 17.2,110.5 16.2,112.6 16.2,115.1 14.7,116.2 14.4,120.2" fill="none" stroke="#000" stroke-width="1.2"/><polyline points="18.6,108.0 25.8,113.0" fill="none" stroke="#000" stroke-width="1.2"/><polyline points="25.8,115.5 19.7,117.7 14.8,119.9" fill="none" stroke="#000" stroke-width="1.2"/><polyline points="11.2,117.2 14.4,120.4" fill="none" stroke="#000" stroke-width="1.1"/><rect x="35" y="112" width="14" height="1.2" fill="#000"/><rect x="36.2" y="107" width="1.2" height="12" fill="#000"/><rect x="40.2" y="107" width="1.2" height="12" fill="#000"/><rect x="44.2" y="107" width="1.2" height="12" fill="#000"/><rect x="57" y="107" width="16" height="1.2" fill="#000"/><rect x="58.9" y="105" width="1.2" height="5.8" fill="#000"/><rect x="62.9" y="105" width="1.2" height="5.8" fill="#000"/><rect x="66.9" y="105" width="1.2" height="5.8" fill="#000"/><rect x="70.9" y="105" width="1.2" height="5.8" fill="#000"/><text x="59.8" y="119.6" font-size="11" fill="#808000" text-anchor="start" font-family="Liberation Sans, Noto Sans CJK SC, sans-serif" font-weight="300">金</text><rect x="80" y="107" width="16" height="1.2" fill="#000"/><rect x="81.9" y="105" width="1.2" height="5.8" fill="#000"/><rect x="85.9" y="105" width="1.2" height="5.8" fill="#000"/><rect x="89.9" y="105" width="1.2" height="5.8" fill="#000"/><rect x="93.9" y="105" width="1.2" height="5.8" fill="#000"/><text x="82.8" y="119.6" font-size="11" fill="#808000" text-anchor="start" font-family="Liberation Sans, Noto Sans CJK SC, sans-serif" font-weight="300">金</text><rect x="103" y="107" width="16" height="1.2" fill="#000"/><rect x="104.9" y="105" width="1.2" height="5.8" fill="#000"/><rect x="108.9" y="105" width="1.2" height="5.8" fill="#000"/><rect x="112.9" y="105" width="1.2" height="5.8" fill="#000"/><rect x="116.9" y="105" width="1.2" height="5.8" fill="#000"/><path d="M109,119.5 V112.5 H113.6 M109,115.8 H112.6" stroke="#000" fill="none" stroke-width="1.2"/><rect x="126" y="107" width="16" height="1.2" fill="#000"/><rect x="127.9" y="105" width="1.2" height="5.8" fill="#000"/><rect x="131.9" y="105" width="1.2" height="5.8" fill="#000"/><rect x="135.9" y="105" width="1.2" height="5.8" fill="#000"/><rect x="139.9" y="105" width="1.2" height="5.8" fill="#000"/><path d="M129,111.5 H140 Q141.5,116 137,119.5 Q132,121 130.5,118 Q130.5,115 134,115.5 Q136,116.5 134.5,118" stroke="#000" fill="none" stroke-width="1.2"/><g transform="translate(152.5,104.8) scale(0.8)"><polygon points="7.6,3.4 14.6,8.2 14.6,10.6 8.7,12.4 5.7,11.4 5.3,7.6" fill="#c4c4c4"/><polygon points="9.0,5.5 12.0,7.5 10.5,10.5 7.5,10.0" fill="#ececec"/><polygon points="9.1,2.7 10.8,0.2 12.6,0.0 12.6,1.3 13.7,1.6 15.1,0.9 15.1,7.3 11.2,4.1" fill="#ff0000"/><polygon points="4.1,13.5 5.5,10.8 7.8,12.2 6.2,13.5" fill="#ff0000"/><polyline points="10.5,0.2 7.6,3.0 6.2,5.5 5.2,7.6 5.2,10.1 3.7,11.2 3.4,15.2" fill="none" stroke="#000" stroke-width="1.2"/><polyline points="7.6,3.0 14.8,8.0" fill="none" stroke="#000" stroke-width="1.2"/><polyline points="14.8,10.5 8.7,12.7 3.8,14.9" fill="none" stroke="#000" stroke-width="1.2"/></g><rect x="148.7" y="118.2" width="16.3" height="1.2" fill="#000"/><rect x="149.2" y="116.5" width="1.1" height="4.4" fill="#000"/><rect x="154.6" y="116.5" width="1.1" height="4.4" fill="#000"/><rect x="157.3" y="116.5" width="1.1" height="4.4" fill="#000"/><rect x="160.3" y="116.5" width="1.1" height="4.4" fill="#000"/><rect x="163.4" y="116.5" width="1.1" height="4.4" fill="#000"/><circle cx="180" cy="113" r="7.3" stroke="#000" fill="none" stroke-width="1.1"/><rect x="173" y="112.5" width="14" height="1.1" fill="#000"/><rect x="175" y="111" width="1" height="4" fill="#000"/><rect x="177" y="111" width="1" height="4" fill="#000"/><rect x="179" y="111" width="1" height="4" fill="#000"/><rect x="181" y="111" width="1" height="4" fill="#000"/><rect x="183" y="111" width="1" height="4" fill="#000"/><rect x="185" y="111" width="1" height="4" fill="#000"/><path d="M183,109 L187,105.5" stroke="#000" fill="none" stroke-width="1"/><rect x="195" y="112" width="15.5" height="1.2" fill="#000"/><rect x="196.5" y="107" width="1.2" height="12" fill="#000"/><rect x="200.4" y="107" width="1.2" height="12" fill="#000"/><rect x="204.3" y="107" width="1.2" height="12" fill="#000"/><rect x="208.2" y="107" width="1.2" height="12" fill="#000"/><rect x="218" y="106.5" width="16" height="1.2" fill="#000"/><rect x="219.9" y="104.5" width="1.2" height="5.8" fill="#000"/><rect x="223.9" y="104.5" width="1.2" height="5.8" fill="#000"/><rect x="227.9" y="104.5" width="1.2" height="5.8" fill="#000"/><rect x="231.9" y="104.5" width="1.2" height="5.8" fill="#000"/><text x="220.5" y="120" font-size="11" fill="#000" text-anchor="start" font-family="Liberation Sans, sans-serif">n</text><text x="227.5" y="116.5" font-size="8" fill="#000" text-anchor="start" font-family="Liberation Sans, sans-serif">2</text><path d="M241.5,119.5 L248,107 L254.5,112.5 Z" stroke="#404040" fill="none" stroke-width="1.1"/><path d="M248.5,106 V120.5 M251.5,106 V120.5" stroke="#606060" fill="none" stroke-width="1"/><path d="M256,105.5 V120.5" stroke="#a0a0a0" fill="none" stroke-width="1"/><circle cx="272.5" cy="112.5" r="6.5" stroke="#000" fill="none" stroke-width="1.1"/><circle cx="272.5" cy="113" r="2" stroke="#000" fill="none" stroke-width="1"/><rect x="264.5" y="113.5" width="15.5" height="1.1" fill="#ff0000"/><rect x="271.6" y="105" width="1.1" height="16" fill="#ff0000"/><path d="M272.5,106 Q278,106.5 279.5,110" stroke="#000" fill="none" stroke-width="1.1"/><circle cx="294.5" cy="112.5" r="6.3" stroke="#808080" fill="none" stroke-width="0.8"/><circle cx="294.5" cy="112.5" r="3.5" stroke="#808080" fill="none" stroke-width="0.8"/><path d="M289.5,107.5 L299.5,117.5 M299.5,107.5 L289.5,117.5" stroke="#008080" fill="none" stroke-width="1.6"/><path d="M287.0,112.5 H302.0 M294.5,105.0 V120.0" stroke="#ff0000" fill="none" stroke-width="1" stroke-dasharray="1.5 1"/><rect x="310.5" y="105.5" width="14" height="14" fill="none" stroke="#707070" stroke-width="0.9"/><rect x="312.5" y="107.5" width="10" height="10" fill="none" stroke="#707070" stroke-width="0.9"/><rect x="314.5" y="109.5" width="6" height="6" fill="none" stroke="#707070" stroke-width="0.9"/><path d="M310.5,105.5 L324.5,119.5 M324.5,105.5 L310.5,119.5" stroke="#ff0000" fill="none" stroke-width="1" stroke-dasharray="1.2 1.6"/><path d="M310.0,112.5 H325.0 M317.5,105.0 V120.0" stroke="#008080" fill="none" stroke-width="1" stroke-dasharray="1.5 1.5"/><path d="M334.5,120.5 V106 M334.5,118 L342,106.5 M342,106 V120.5" stroke="#000" fill="none" stroke-width="1.2"/><rect x="344.5" y="106" width="1.2" height="2.5" fill="#000"/><rect x="347" y="106" width="1.2" height="2.5" fill="#000"/><rect x="355.6" y="107.3" width="16.5" height="1.2" fill="#000"/><rect x="355.6" y="105" width="1.2" height="6" fill="#000"/><rect x="370.90000000000003" y="105" width="1.2" height="6" fill="#000"/><rect x="359.6" y="105" width="1.2" height="4" fill="#000"/><text x="358.6" y="120.3" font-size="11.5" fill="#ff0000" text-anchor="start" font-family="Liberation Sans, Noto Sans CJK SC, sans-serif">神</text><rect x="378.75" y="107.3" width="16.5" height="1.2" fill="#000"/><rect x="378.75" y="105" width="1.2" height="6" fill="#000"/><rect x="394.05" y="105" width="1.2" height="6" fill="#000"/><rect x="382.75" y="105" width="1.2" height="4" fill="#000"/><text x="381.75" y="120.3" font-size="11.5" fill="#ff0000" text-anchor="start" font-family="Liberation Sans, Noto Sans CJK SC, sans-serif">赢</text><rect x="402.5" y="106" width="15" height="1.2" fill="#000"/><rect x="403.0" y="106" width="1.2" height="14.5" fill="#000"/><rect x="401.5" y="119.5" width="4" height="1.2" fill="#000"/><rect x="406.0" y="108.8" width="1.6" height="1.2" fill="#000"/><rect x="409.0" y="108.8" width="1.6" height="1.2" fill="#000"/><rect x="412.0" y="108.8" width="1.6" height="1.2" fill="#000"/><rect x="415.0" y="108.8" width="1.6" height="1.2" fill="#000"/><rect x="406.0" y="111.3" width="1.6" height="1.2" fill="#000"/><rect x="409.0" y="111.3" width="1.6" height="1.2" fill="#000"/><rect x="412.0" y="111.3" width="1.6" height="1.2" fill="#000"/><rect x="415.0" y="111.3" width="1.6" height="1.2" fill="#000"/><rect x="406.0" y="113.8" width="1.6" height="1.2" fill="#000"/><rect x="409.0" y="113.8" width="1.6" height="1.2" fill="#000"/><rect x="412.0" y="113.8" width="1.6" height="1.2" fill="#000"/><rect x="415.0" y="113.8" width="1.6" height="1.2" fill="#000"/><text x="412.5" y="121" font-size="5.5" fill="#000" text-anchor="middle" font-family="Liberation Sans, sans-serif" font-weight="bold" textLength="9" lengthAdjust="spacingAndGlyphs">123</text><rect x="425" y="106" width="1.2" height="11" fill="#000"/><rect x="439.5" y="106" width="1.2" height="11" fill="#000"/><rect x="432.2" y="105" width="1.2" height="16" fill="#000"/><rect x="426" y="111.4" width="14" height="1.2" fill="#000"/><path d="M426.2,112 L428.8,109.8 V114.2 Z M439.5,112 L436.9,109.8 V114.2 Z" stroke="none" fill="#000" stroke-width="1"/><rect x="446" y="101" width="1" height="24" fill="#a0a0a0"/><rect x="447" y="101" width="1" height="24" fill="#fff"/><rect x="450" y="103" width="3" height="20" fill="#f8f8f8"/><rect x="450" y="103" width="1" height="20" fill="#fff"/><rect x="452" y="103" width="1" height="20" fill="#a0a0a0"/><rect x="450" y="122" width="3" height="1" fill="#a0a0a0"/><rect x="463.5" y="106.5" width="9" height="9" fill="none" stroke="#000" stroke-width="1.2"/><path d="M460.5,106.5 V115.5 M459,106.5 H462 M459,115.5 H462 M459.5,111 H461.5" stroke="#808080" fill="none" stroke-width="1"/><path d="M463.5,119 H472.5 M463.5,117 V121 M472.5,117 V121" stroke="#808080" fill="none" stroke-width="1"/><path d="M482,120 L485,105 M482,120 L489.5,106 M482,120 L496.5,112 M482,120 L496.5,117" stroke="#ff0000" fill="none" stroke-width="1.1"/><path d="M482,120 L496.5,106" stroke="#000" fill="none" stroke-width="1.1"/><path d="M482,120 L483,109" stroke="#900000" fill="none" stroke-width="1.1"/><path d="M482,120 L494,118.5" stroke="#900000" fill="none" stroke-width="1.1"/><rect x="504.6" y="107.6" width="12.8" height="12.8" fill="none" stroke="#000" stroke-width="1.2"/><path d="M504.6,120.4 L508.5,105 M504.6,120.4 L520,116.5" stroke="#9000a0" fill="none" stroke-width="1"/><path d="M504.6,120.4 L513.5,105 M504.6,120.4 L520,111.5" stroke="#900000" fill="none" stroke-width="1"/><path d="M504.6,120.4 L519.5,105.5" stroke="#ff0000" fill="none" stroke-width="1.2"/><rect x="527.6" y="105.6" width="12.8" height="12.8" fill="none" stroke="#000" stroke-width="1.2"/><path d="M527.6,105.6 L532.5,121 M527.6,105.6 L543,109.5" stroke="#9000a0" fill="none" stroke-width="1"/><path d="M527.6,105.6 L537.5,121 M527.6,105.6 L543,115" stroke="#900000" fill="none" stroke-width="1"/><path d="M527.6,105.6 L543,121" stroke="#ff0000" fill="none" stroke-width="1.2"/><path d="M550.5,120.5 L566,105.5 M550.5,120.5 L566,113 M550.5,120.5 L566,117.5" stroke="#000" fill="none" stroke-width="1.1"/><path d="M550.5,121 L554.5,118 L554,120.5 Z" stroke="none" fill="#000" stroke-width="1"/><path d="M573.5,107 L579.0,120 L584.5,110.5 L587.5,115" stroke="#000" fill="none" stroke-width="1.1"/><path d="M572.5,120.5 H588.5" stroke="#606060" fill="none" stroke-width="1" stroke-dasharray="1 1"/><rect x="596.5" y="105.5" width="14.5" height="14.5" fill="#f4f4f4" stroke="#909090" stroke-width="0.9"/><path d="M601.5,105.5 V120 M606.5,105.5 V120 M596.5,110.5 H611 M596.5,115.5 H611" stroke="#808080" fill="none" stroke-width="1"/><rect x="596.2" y="105.2" width="1.3" height="1.3" fill="#ff0000"/><rect x="601.1" y="105.2" width="1.3" height="1.3" fill="#ff0000"/><rect x="606.0" y="105.2" width="1.3" height="1.3" fill="#ff0000"/><rect x="610.9000000000001" y="105.2" width="1.3" height="1.3" fill="#ff0000"/><rect x="596.2" y="110.10000000000001" width="1.3" height="1.3" fill="#ff0000"/><rect x="601.1" y="110.10000000000001" width="1.3" height="1.3" fill="#ff0000"/><rect x="610.9000000000001" y="110.10000000000001" width="1.3" height="1.3" fill="#ff0000"/><rect x="596.2" y="115.0" width="1.3" height="1.3" fill="#ff0000"/><rect x="606.0" y="115.0" width="1.3" height="1.3" fill="#ff0000"/><rect x="610.9000000000001" y="115.0" width="1.3" height="1.3" fill="#ff0000"/><rect x="596.2" y="119.9" width="1.3" height="1.3" fill="#ff0000"/><rect x="601.1" y="119.9" width="1.3" height="1.3" fill="#ff0000"/><rect x="606.0" y="119.9" width="1.3" height="1.3" fill="#ff0000"/><rect x="610.9000000000001" y="119.9" width="1.3" height="1.3" fill="#ff0000"/><circle cx="604" cy="113" r="1.8" stroke="#ff0000" fill="none" stroke-width="0.9"/><circle cx="599" cy="108" r="1.5" stroke="#808080" fill="none" stroke-width="0.8"/><circle cx="609" cy="108" r="1.5" stroke="#808080" fill="none" stroke-width="0.8"/><circle cx="599" cy="118" r="1.5" stroke="#808080" fill="none" stroke-width="0.8"/><circle cx="609" cy="118" r="1.5" stroke="#808080" fill="none" stroke-width="0.8"/><rect x="619.5" y="105.5" width="14.5" height="14.5" fill="#f4f4f4" stroke="#909090" stroke-width="0.9"/><path d="M624.5,105.5 V120 M629.5,105.5 V120 M619.5,110.5 H634 M619.5,115.5 H634" stroke="#808080" fill="none" stroke-width="1"/><rect x="619.2" y="105.2" width="1.3" height="1.3" fill="#ff0000"/><rect x="624.1" y="105.2" width="1.3" height="1.3" fill="#ff0000"/><rect x="629.0" y="105.2" width="1.3" height="1.3" fill="#ff0000"/><rect x="633.9000000000001" y="105.2" width="1.3" height="1.3" fill="#ff0000"/><rect x="619.2" y="110.10000000000001" width="1.3" height="1.3" fill="#ff0000"/><rect x="624.1" y="110.10000000000001" width="1.3" height="1.3" fill="#ff0000"/><rect x="633.9000000000001" y="110.10000000000001" width="1.3" height="1.3" fill="#ff0000"/><rect x="619.2" y="115.0" width="1.3" height="1.3" fill="#ff0000"/><rect x="629.0" y="115.0" width="1.3" height="1.3" fill="#ff0000"/><rect x="633.9000000000001" y="115.0" width="1.3" height="1.3" fill="#ff0000"/><rect x="619.2" y="119.9" width="1.3" height="1.3" fill="#ff0000"/><rect x="624.1" y="119.9" width="1.3" height="1.3" fill="#ff0000"/><rect x="629.0" y="119.9" width="1.3" height="1.3" fill="#ff0000"/><rect x="633.9000000000001" y="119.9" width="1.3" height="1.3" fill="#ff0000"/><circle cx="627" cy="113" r="1.8" stroke="#ff0000" fill="none" stroke-width="0.9"/><circle cx="622" cy="108" r="1.5" stroke="#808080" fill="none" stroke-width="0.8"/><circle cx="632" cy="108" r="1.5" stroke="#808080" fill="none" stroke-width="0.8"/><circle cx="622" cy="118" r="1.5" stroke="#808080" fill="none" stroke-width="0.8"/><circle cx="632" cy="118" r="1.5" stroke="#808080" fill="none" stroke-width="0.8"/><rect x="619.5" y="105" width="1.5" height="15.5" fill="#000"/><rect x="619.5" y="119.3" width="15" height="1.5" fill="#000"/><path d="M618.2,108 L620.2,104.8 L622.2,108 Z M632,118 L635.2,120 L632,122 Z" stroke="none" fill="#000" stroke-width="1"/><path d="M643,113.5 L657.5,105.5 M643,117 L657.5,109 M643,120.5 L657.5,112.5" stroke="#000" fill="none" stroke-width="1.1"/><path d="M643.5,105.5 V120.5" stroke="#808080" fill="none" stroke-width="1"/><path d="M654.5,105.5 V120.5" stroke="#808080" fill="none" stroke-width="1"/><rect x="663" y="101" width="1" height="24" fill="#a0a0a0"/><rect x="664" y="101" width="1" height="24" fill="#fff"/><rect x="667.5" y="103" width="3" height="20" fill="#f8f8f8"/><rect x="667.5" y="103" width="1" height="20" fill="#fff"/><rect x="669.5" y="103" width="1" height="20" fill="#a0a0a0"/><rect x="667.5" y="122" width="3" height="1" fill="#a0a0a0"/><rect x="676.5" y="106" width="1.3" height="14.5" fill="#000"/><rect x="676.5" y="119.3" width="14" height="1.3" fill="#000"/><rect x="677.5" y="107.0" width="6" height="1.1" fill="#000"/><rect x="677.5" y="109.1" width="8" height="1.1" fill="#000"/><rect x="677.5" y="111.2" width="6" height="1.1" fill="#000"/><rect x="677.5" y="113.3" width="8" height="1.1" fill="#000"/><rect x="677.5" y="115.4" width="6" height="1.1" fill="#000"/><rect x="677.5" y="117.5" width="8" height="1.1" fill="#000"/><path d="M687,107.5 H690 M687,110 H689.5 V112.5 H687 M687,115 H690 M688.5,117 L690,119.5" stroke="#000" fill="none" stroke-width="1"/><rect x="698" y="105.5" width="16" height="1.2" fill="#ff0000"/><rect x="698" y="119.3" width="5.5" height="1.2" fill="#ff0000"/><rect x="707" y="111.5" width="7" height="1.2" fill="#ff0000"/><path d="M700.5,120 L706.5,106 L710.5,110.5 L714,106.5" stroke="#000" fill="none" stroke-width="1.1"/><text x="709.8" y="120.5" font-size="10" fill="#ff0000" text-anchor="middle" font-family="Liberation Sans, sans-serif" textLength="9" lengthAdjust="spacingAndGlyphs">%</text><text x="729" y="119" font-size="14.5" fill="#000" text-anchor="middle" font-family="Liberation Sans, sans-serif" textLength="12.5" lengthAdjust="spacingAndGlyphs">%</text><rect x="743.75" y="105.5" width="16" height="1.2" fill="#000"/><rect x="750.75" y="108.5" width="9" height="1.2" fill="#000"/><rect x="753.25" y="113" width="6.5" height="1.2" fill="#000"/><rect x="743.75" y="119.3" width="16" height="1.2" fill="#000"/><text x="748.45" y="118.8" font-size="10" fill="#ff0000" text-anchor="middle" font-family="Liberation Sans, sans-serif" textLength="9" lengthAdjust="spacingAndGlyphs">%</text><circle cx="775" cy="113" r="7.3" stroke="#a0a0a0" fill="#f8f8f8" stroke-width="1.2"/><text x="769.7" y="117.2" font-size="10.5" fill="#808000" text-anchor="start" font-family="Liberation Sans, Noto Sans CJK SC, sans-serif" font-weight="bold">金</text><rect x="790" y="105.5" width="16" height="1.2" fill="#000"/><rect x="798" y="108.5" width="8" height="1.2" fill="#000"/><rect x="800" y="113" width="6" height="1.2" fill="#000"/><rect x="790" y="119.3" width="16" height="1.2" fill="#000"/><text x="789.7" y="119" font-size="10" fill="#808000" text-anchor="start" font-family="Liberation Sans, Noto Sans CJK SC, sans-serif" font-weight="bold">金</text><rect x="815" y="105" width="1.2" height="15.8" fill="#000"/><rect x="813" y="107.8" width="5.2" height="1.1" fill="#000"/><rect x="813" y="110.6" width="5.2" height="1.1" fill="#000"/><rect x="813" y="113.4" width="5.2" height="1.1" fill="#000"/><rect x="813" y="116.2" width="5.2" height="1.1" fill="#000"/><rect x="813" y="119.8" width="5.2" height="1.1" fill="#000"/><g transform="translate(817.6,106) scale(0.76,0.92)"><polygon points="7.6,3.4 14.6,8.2 14.6,10.6 8.7,12.4 5.7,11.4 5.3,7.6" fill="#c4c4c4"/><polygon points="9.0,5.5 12.0,7.5 10.5,10.5 7.5,10.0" fill="#ececec"/><polygon points="9.1,2.7 10.8,0.2 12.6,0.0 12.6,1.3 13.7,1.6 15.1,0.9 15.1,7.3 11.2,4.1" fill="#ff0000"/><polygon points="4.1,13.5 5.5,10.8 7.8,12.2 6.2,13.5" fill="#ff0000"/><polyline points="10.5,0.2 7.6,3.0 6.2,5.5 5.2,7.6 5.2,10.1 3.7,11.2 3.4,15.2" fill="none" stroke="#000" stroke-width="1.2"/><polyline points="7.6,3.0 14.8,8.0" fill="none" stroke="#000" stroke-width="1.2"/><polyline points="14.8,10.5 8.7,12.7 3.8,14.9" fill="none" stroke="#000" stroke-width="1.2"/></g><rect x="836" y="105.2" width="16" height="1.2" fill="#ff0000"/><rect x="836" y="119.6" width="16" height="1.2" fill="#ff0000"/><rect x="836" y="112" width="16" height="1" fill="#000"/><polyline points="836,117.5 837.5,113 839,108.6 840.6,107.3 842,110 843.3,116 844.6,119.2 846,118 848,113.5 850.2,109.8 851.7,107.4" fill="none" stroke="#808080" stroke-width="1.1"/><rect x="859" y="104.8" width="16" height="1.2" fill="#ff0000"/><rect x="859" y="119.8" width="16" height="1.2" fill="#ff0000"/><text x="861.5" y="118.2" font-size="11" fill="#808000" text-anchor="start" font-family="Liberation Sans, Noto Sans CJK SC, sans-serif" font-weight="300">金</text><path d="M882.3,120.7 L898,105" stroke="#000" fill="none" stroke-width="1.2"/><rect x="891.3" y="111.8" width="5.9" height="1.4" fill="#000"/><rect x="887.3" y="115.6" width="9.9" height="1.4" fill="#000"/><rect x="883.2" y="119" width="14" height="1.4" fill="#000"/><path d="M886.5,106 V112.5 Q886,114.5 883,113.5" stroke="#ff0000" fill="none" stroke-width="1.4"/><path d="M905.3,120.7 L921,105" stroke="#000" fill="none" stroke-width="1.2"/><rect x="914.3" y="111.8" width="5.9" height="1.4" fill="#000"/><rect x="910.3" y="115.6" width="9.9" height="1.4" fill="#000"/><rect x="906.2" y="119" width="14" height="1.4" fill="#000"/><path d="M906.8,115 V106.3 H911.5 M906.8,110.3 H910.8" stroke="#ff0000" fill="none" stroke-width="1.8"/><path d="M928.3,120.7 L944,105" stroke="#000" fill="none" stroke-width="1.2"/><rect x="937.3" y="111.8" width="5.9" height="1.4" fill="#000"/><rect x="933.3" y="115.6" width="9.9" height="1.4" fill="#000"/><rect x="929.2" y="119" width="14" height="1.4" fill="#000"/><text x="928" y="115.5" font-size="10.5" fill="#808000" text-anchor="start" font-family="Liberation Sans, Noto Sans CJK SC, sans-serif" font-weight="bold">金</text><path d="M951.3,120.7 L967,105" stroke="#000" fill="none" stroke-width="1.2"/><rect x="960.3" y="111.8" width="5.9" height="1.4" fill="#000"/><rect x="956.3" y="115.6" width="9.9" height="1.4" fill="#000"/><rect x="952.2" y="119" width="14" height="1.4" fill="#000"/><text x="951" y="115.8" font-size="11" fill="#ff0000" text-anchor="start" font-family="Liberation Sans, Noto Sans CJK SC, sans-serif">神</text><path d="M974.3,120.7 L990,105" stroke="#000" fill="none" stroke-width="1.2"/><rect x="983.3" y="111.8" width="5.9" height="1.4" fill="#000"/><rect x="979.3" y="115.6" width="9.9" height="1.4" fill="#000"/><rect x="975.2" y="119" width="14" height="1.4" fill="#000"/><text x="974" y="115.8" font-size="11" fill="#ff0000" text-anchor="start" font-family="Liberation Sans, Noto Sans CJK SC, sans-serif">赢</text><path d="M997.3,120.7 L1013,105" stroke="#000" fill="none" stroke-width="1.2"/><rect x="1006.3" y="111.8" width="5.9" height="1.4" fill="#000"/><rect x="1002.3" y="115.6" width="9.9" height="1.4" fill="#000"/><rect x="998.2" y="119" width="14" height="1.4" fill="#000"/><text x="997" y="115.8" font-size="11" fill="#ff0000" text-anchor="start" font-family="Liberation Sans, Noto Sans CJK SC, sans-serif">四</text></svg><svg id="chart" width="1241" height="556" viewBox="0 126 1241 556" style="position:absolute;left:0;top:126px"><rect x="0" y="126" width="1241" height="556" fill="#fff"/>
<rect x="1240" y="126" width="1" height="556" fill="#a0a0a0"/>
<rect x="70" y="139" width="1170" height="1" fill="#999"/>
<text x="70.7" y="137" font-size="8.2" fill="#a0a0a0" text-anchor="start" font-family="Liberation Sans, sans-serif" textLength="19.3" lengthAdjust="spacingAndGlyphs">04-21</text>
<text x="129.7" y="137" font-size="8.2" fill="#a0a0a0" text-anchor="start" font-family="Liberation Sans, sans-serif" textLength="19.3" lengthAdjust="spacingAndGlyphs">05-07</text>
<text x="199.7" y="137" font-size="8.2" fill="#a0a0a0" text-anchor="start" font-family="Liberation Sans, sans-serif" textLength="19.3" lengthAdjust="spacingAndGlyphs">05-21</text>
<text x="269.7" y="137" font-size="8.2" fill="#a0a0a0" text-anchor="start" font-family="Liberation Sans, sans-serif" textLength="19.3" lengthAdjust="spacingAndGlyphs">06-05</text>
<text x="339.7" y="137" font-size="8.2" fill="#a0a0a0" text-anchor="start" font-family="Liberation Sans, sans-serif" textLength="19.3" lengthAdjust="spacingAndGlyphs">06-19</text>
<text x="409.7" y="137" font-size="8.2" fill="#a0a0a0" text-anchor="start" font-family="Liberation Sans, sans-serif" textLength="19.3" lengthAdjust="spacingAndGlyphs">07-03</text>
<text x="479.7" y="137" font-size="8.2" fill="#a0a0a0" text-anchor="start" font-family="Liberation Sans, sans-serif" textLength="19.3" lengthAdjust="spacingAndGlyphs">07-17</text>
<text x="549.7" y="137" font-size="8.2" fill="#a0a0a0" text-anchor="start" font-family="Liberation Sans, sans-serif" textLength="19.3" lengthAdjust="spacingAndGlyphs">07-31</text>
<text x="619.7" y="137" font-size="8.2" fill="#a0a0a0" text-anchor="start" font-family="Liberation Sans, sans-serif" textLength="19.3" lengthAdjust="spacingAndGlyphs">08-14</text>
<text x="689.7" y="137" font-size="8.2" fill="#a0a0a0" text-anchor="start" font-family="Liberation Sans, sans-serif" textLength="19.3" lengthAdjust="spacingAndGlyphs">08-28</text>
<text x="759.7" y="137" font-size="8.2" fill="#a0a0a0" text-anchor="start" font-family="Liberation Sans, sans-serif" textLength="19.3" lengthAdjust="spacingAndGlyphs">09-12</text>
<text x="829.7" y="137" font-size="8.2" fill="#a0a0a0" text-anchor="start" font-family="Liberation Sans, sans-serif" textLength="19.3" lengthAdjust="spacingAndGlyphs">09-26</text>
<text x="899.7" y="137" font-size="8.2" fill="#a0a0a0" text-anchor="start" font-family="Liberation Sans, sans-serif" textLength="19.3" lengthAdjust="spacingAndGlyphs">10-17</text>
<text x="969.7" y="137" font-size="8.2" fill="#a0a0a0" text-anchor="start" font-family="Liberation Sans, sans-serif" textLength="19.3" lengthAdjust="spacingAndGlyphs">10-31</text>
<text x="1039.7" y="137" font-size="8.2" fill="#a0a0a0" text-anchor="start" font-family="Liberation Sans, sans-serif" textLength="19.3" lengthAdjust="spacingAndGlyphs">11-14</text>
<text x="1109.7" y="137" font-size="8.2" fill="#a0a0a0" text-anchor="start" font-family="Liberation Sans, sans-serif" textLength="19.3" lengthAdjust="spacingAndGlyphs">11-28</text>
<text x="1179.7" y="137" font-size="8.2" fill="#a0a0a0" text-anchor="start" font-family="Liberation Sans, sans-serif" textLength="19.3" lengthAdjust="spacingAndGlyphs">12-12</text>
<text x="3" y="144" font-size="12" fill="#0000ff" text-anchor="start" font-family="Liberation Serif, Noto Serif CJK SC, serif" font-weight="bold">日</text>
<text x="16.5" y="144" font-size="11.5" fill="#0000ff" text-anchor="start" font-family="Liberation Serif, serif" font-weight="bold" textLength="6.5" lengthAdjust="spacingAndGlyphs">K</text>
<text x="22.5" y="144" font-size="12" fill="#0000ff" text-anchor="start" font-family="Liberation Serif, Noto Serif CJK SC, serif" font-weight="bold">线</text>
<text x="1140.5" y="152" font-size="12" fill="#0000ff" text-anchor="start" font-family="Liberation Serif, serif" font-weight="bold" textLength="39" lengthAdjust="spacingAndGlyphs">1A0001</text>
<text x="1189" y="151.5" font-size="12" fill="#0000ff" text-anchor="start" font-family="Liberation Serif, Noto Serif CJK SC, serif" font-weight="bold" textLength="49.5" lengthAdjust="spacingAndGlyphs">上证指数</text>
<rect x="70" y="164" width="1104.16" height="1" fill="#ff0000"/>
<rect x="70" y="169" width="1090.16" height="1" fill="#800080"/>
<rect x="70" y="193" width="1090.16" height="1" fill="#a0c8f0"/>
<rect x="70" y="215" width="1083.16" height="1" fill="#0000ff"/>
<rect x="70" y="278" width="1104.16" height="1" fill="#ff0000"/>
<rect x="70" y="307" width="1090.16" height="1" fill="#a0c8f0"/>
<rect x="70" y="309" width="1104.16" height="1" fill="#ff0000"/>
<rect x="70" y="392" width="1104.16" height="1" fill="#ff0000"/>
<rect x="70" y="403" width="1090.16" height="1" fill="#808080"/>
<rect x="70" y="421" width="1097.16" height="1" fill="#a0c8f0"/>
<rect x="70" y="449" width="1097.16" height="1" fill="#800080"/>
<rect x="70" y="496" width="1090.16" height="1" fill="#0000ff"/>
<rect x="70" y="506" width="1118" height="1" fill="#ff0000"/>
<line x1="1028" y1="174.5" x2="1238" y2="174.5" stroke="#808080" stroke-width="1" stroke-dasharray="5 2"/>
<rect x="347" y="157" width="1" height="365" fill="#0000ff"/>
<rect x="490" y="157" width="1" height="365" fill="#008080"/>
<rect x="632" y="157" width="1" height="365" fill="#800080"/>
<rect x="1095" y="157" width="1" height="365" fill="#ff0000"/>
<line x1="70" y1="522.5" x2="1240" y2="522.5" stroke="#999" stroke-width="1" stroke-dasharray="3.5 2.5"/>
<line x1="70" y1="540.5" x2="1240" y2="540.5" stroke="#999" stroke-width="1" stroke-dasharray="3.5 2.5"/>
<line x1="70" y1="556.5" x2="1240" y2="556.5" stroke="#999" stroke-width="1" stroke-dasharray="3.5 2.5"/>
<line x1="70" y1="572.5" x2="1240" y2="572.5" stroke="#999" stroke-width="1" stroke-dasharray="3.5 2.5"/>
<rect x="0" y="588" width="1241" height="2" fill="#808080"/>
<rect x="70" y="605" width="1170" height="1" fill="#999"/>
<line x1="70" y1="610.5" x2="1240" y2="610.5" stroke="#999" stroke-width="1" stroke-dasharray="3.5 2.5"/>
<line x1="70" y1="628.5" x2="1240" y2="628.5" stroke="#999" stroke-width="1" stroke-dasharray="3.5 2.5"/>
<line x1="70" y1="646.5" x2="1240" y2="646.5" stroke="#999" stroke-width="1" stroke-dasharray="3.5 2.5"/>
<line x1="70" y1="654.5" x2="1240" y2="654.5" stroke="#999" stroke-width="1" stroke-dasharray="3.5 2.5"/>
<line x1="70" y1="664.5" x2="1240" y2="664.5" stroke="#999" stroke-width="1" stroke-dasharray="3.5 2.5"/>
<text x="349" y="476.7" font-size="10.5" fill="#0000ff" text-anchor="start" font-family="Liberation Sans, sans-serif" textLength="17.5" lengthAdjust="spacingAndGlyphs">233</text>
<text x="492" y="476.7" font-size="10.5" fill="#008080" text-anchor="start" font-family="Liberation Sans, sans-serif" textLength="17.5" lengthAdjust="spacingAndGlyphs">260</text>
<text x="634" y="476.7" font-size="10.5" fill="#800080" text-anchor="start" font-family="Liberation Sans, sans-serif" textLength="17.5" lengthAdjust="spacingAndGlyphs">280</text>
<text x="1097" y="476.7" font-size="10.5" fill="#ff0000" text-anchor="start" font-family="Liberation Sans, sans-serif" textLength="17.5" lengthAdjust="spacingAndGlyphs">346</text>
<rect x="73" y="422" width="1" height="24" fill="#008000"/>
<rect x="70" y="432" width="6" height="14" fill="#008000"/>
<rect x="80" y="440" width="1" height="1" fill="#ff0000"/>
<rect x="80" y="448" width="1" height="10" fill="#ff0000"/>
<rect x="77.5" y="441.5" width="5" height="6" fill="none" stroke="#ff0000"/>
<rect x="87" y="440" width="1" height="10" fill="#008000"/>
<rect x="84" y="444" width="6" height="1" fill="#008000"/>
<rect x="94" y="440" width="1" height="12" fill="#008000"/>
<rect x="91" y="447" width="6" height="4" fill="#008000"/>
<rect x="101" y="447" width="1" height="19" fill="#008000"/>
<rect x="98" y="449" width="6" height="16" fill="#008000"/>
<rect x="108" y="467" width="1" height="22" fill="#008000"/>
<rect x="105" y="467" width="6" height="20" fill="#008000"/>
<rect x="115" y="475" width="1" height="1" fill="#ff0000"/>
<rect x="115" y="488" width="1" height="3" fill="#ff0000"/>
<rect x="112.5" y="476.5" width="5" height="11" fill="none" stroke="#ff0000"/>
<rect x="122" y="470" width="1" height="2" fill="#ff0000"/>
<rect x="122" y="476" width="1" height="2" fill="#ff0000"/>
<rect x="119.5" y="472.5" width="5" height="3" fill="none" stroke="#ff0000"/>
<rect x="129" y="470" width="1" height="1" fill="#ff0000"/>
<rect x="129" y="475" width="1" height="10" fill="#ff0000"/>
<rect x="126.5" y="471.5" width="5" height="3" fill="none" stroke="#ff0000"/>
<rect x="136" y="464" width="1" height="7" fill="#ff0000"/>
<rect x="136" y="473" width="1" height="2" fill="#ff0000"/>
<rect x="133" y="471" width="6" height="2" fill="#ff0000"/>
<rect x="143" y="474" width="1" height="10" fill="#008000"/>
<rect x="140" y="474" width="6" height="9" fill="#008000"/>
<rect x="150" y="465" width="1" height="14" fill="#ff0000"/>
<rect x="150" y="485" width="1" height="1" fill="#ff0000"/>
<rect x="147.5" y="479.5" width="5" height="5" fill="none" stroke="#ff0000"/>
<rect x="157" y="477" width="1" height="12" fill="#008000"/>
<rect x="154" y="479" width="6" height="3" fill="#008000"/>
<rect x="164" y="453" width="1" height="1" fill="#ff0000"/>
<rect x="164" y="474" width="1" height="4" fill="#ff0000"/>
<rect x="161.5" y="454.5" width="5" height="19" fill="none" stroke="#ff0000"/>
<rect x="171" y="450" width="1" height="10" fill="#008000"/>
<rect x="168" y="453" width="6" height="3" fill="#008000"/>
<rect x="178" y="453" width="1" height="8" fill="#008000"/>
<rect x="175" y="457" width="6" height="1" fill="#008000"/>
<rect x="185" y="459" width="1" height="15" fill="#008000"/>
<rect x="182" y="460" width="6" height="13" fill="#008000"/>
<rect x="192" y="471" width="1" height="1" fill="#ff0000"/>
<rect x="192" y="474" width="1" height="7" fill="#ff0000"/>
<rect x="189" y="472" width="6" height="2" fill="#ff0000"/>
<rect x="199" y="474" width="1" height="18" fill="#008000"/>
<rect x="196" y="474" width="6" height="12" fill="#008000"/>
<rect x="206" y="478" width="1" height="10" fill="#008000"/>
<rect x="203" y="482" width="6" height="2" fill="#008000"/>
<rect x="213" y="489" width="1" height="7" fill="#ff0000"/>
<rect x="210.5" y="473.5" width="5" height="15" fill="none" stroke="#ff0000"/>
<rect x="220" y="463" width="1" height="14" fill="#008000"/>
<rect x="217" y="474" width="6" height="1" fill="#008000"/>
<rect x="227" y="475" width="1" height="3" fill="#ff0000"/>
<rect x="224.5" y="467.5" width="5" height="7" fill="none" stroke="#ff0000"/>
<rect x="234" y="460" width="1" height="6" fill="#008000"/>
<rect x="231" y="461" width="6" height="1" fill="#008000"/>
<rect x="241" y="461" width="1" height="7" fill="#008000"/>
<rect x="238" y="463" width="6" height="3" fill="#008000"/>
<rect x="248" y="454" width="1" height="2" fill="#ff0000"/>
<rect x="248" y="465" width="1" height="5" fill="#ff0000"/>
<rect x="245.5" y="456.5" width="5" height="8" fill="none" stroke="#ff0000"/>
<rect x="255" y="452" width="1" height="11" fill="#008000"/>
<rect x="252" y="455" width="6" height="8" fill="#008000"/>
<rect x="262" y="459" width="1" height="10" fill="#008000"/>
<rect x="259" y="463" width="6" height="1" fill="#008000"/>
<rect x="269" y="457" width="1" height="8" fill="#008000"/>
<rect x="266" y="463" width="6" height="1" fill="#008000"/>
<rect x="276" y="464" width="1" height="17" fill="#008000"/>
<rect x="273" y="464" width="6" height="9" fill="#008000"/>
<rect x="283" y="477" width="1" height="2" fill="#ff0000"/>
<rect x="280.5" y="463.5" width="5" height="13" fill="none" stroke="#ff0000"/>
<rect x="290" y="462" width="1" height="13" fill="#008000"/>
<rect x="287" y="462" width="6" height="8" fill="#008000"/>
<rect x="297" y="459" width="1" height="11" fill="#ff0000"/>
<rect x="297" y="473" width="1" height="1" fill="#ff0000"/>
<rect x="294.5" y="470.5" width="5" height="2" fill="none" stroke="#ff0000"/>
<rect x="304" y="467" width="1" height="5" fill="#ff0000"/>
<rect x="301.5" y="454.5" width="5" height="12" fill="none" stroke="#ff0000"/>
<rect x="311" y="452" width="1" height="1" fill="#ff0000"/>
<rect x="311" y="457" width="1" height="2" fill="#ff0000"/>
<rect x="308.5" y="453.5" width="5" height="3" fill="none" stroke="#ff0000"/>
<rect x="318" y="451" width="1" height="4" fill="#ff0000"/>
<rect x="318" y="456" width="1" height="3" fill="#ff0000"/>
<rect x="315" y="455" width="6" height="1" fill="#ff0000"/>
<rect x="325" y="440" width="1" height="3" fill="#ff0000"/>
<rect x="322.5" y="443.5" width="5" height="13" fill="none" stroke="#ff0000"/>
<rect x="332" y="431" width="1" height="1" fill="#ff0000"/>
<rect x="332" y="442" width="1" height="1" fill="#ff0000"/>
<rect x="329.5" y="432.5" width="5" height="9" fill="none" stroke="#ff0000"/>
<rect x="339" y="436" width="1" height="10" fill="#008000"/>
<rect x="336" y="436" width="6" height="9" fill="#008000"/>
<rect x="346" y="446" width="1" height="9" fill="#008000"/>
<rect x="343" y="447" width="6" height="5" fill="#008000"/>
<rect x="353" y="451" width="1" height="27" fill="#008000"/>
<rect x="350" y="453" width="6" height="21" fill="#008000"/>
<rect x="360" y="471" width="1" height="2" fill="#ff0000"/>
<rect x="360" y="481" width="1" height="1" fill="#ff0000"/>
<rect x="357.5" y="473.5" width="5" height="7" fill="none" stroke="#ff0000"/>
<rect x="367" y="469" width="1" height="5" fill="#008000"/>
<rect x="364" y="472" width="6" height="1" fill="#008000"/>
<rect x="374" y="466" width="1" height="2" fill="#ff0000"/>
<rect x="374" y="474" width="1" height="1" fill="#ff0000"/>
<rect x="371.5" y="468.5" width="5" height="5" fill="none" stroke="#ff0000"/>
<rect x="381" y="469" width="1" height="8" fill="#008000"/>
<rect x="378" y="469" width="6" height="4" fill="#008000"/>
<rect x="388" y="463" width="1" height="1" fill="#ff0000"/>
<rect x="388" y="472" width="1" height="1" fill="#ff0000"/>
<rect x="385.5" y="464.5" width="5" height="7" fill="none" stroke="#ff0000"/>
<rect x="395" y="460" width="1" height="5" fill="#ff0000"/>
<rect x="395" y="467" width="1" height="6" fill="#ff0000"/>
<rect x="392" y="465" width="6" height="2" fill="#ff0000"/>
<rect x="402" y="455" width="1" height="3" fill="#ff0000"/>
<rect x="399.5" y="458.5" width="5" height="5" fill="none" stroke="#ff0000"/>
<rect x="409" y="455" width="1" height="7" fill="#008000"/>
<rect x="406" y="455" width="6" height="1" fill="#008000"/>
<rect x="416" y="449" width="1" height="1" fill="#ff0000"/>
<rect x="416" y="457" width="1" height="3" fill="#ff0000"/>
<rect x="413.5" y="450.5" width="5" height="6" fill="none" stroke="#ff0000"/>
<rect x="423" y="445" width="1" height="3" fill="#ff0000"/>
<rect x="423" y="454" width="1" height="3" fill="#ff0000"/>
<rect x="420.5" y="448.5" width="5" height="5" fill="none" stroke="#ff0000"/>
<rect x="430" y="447" width="1" height="6" fill="#008000"/>
<rect x="427" y="448" width="6" height="1" fill="#008000"/>
<rect x="437" y="447" width="1" height="3" fill="#ff0000"/>
<rect x="437" y="451" width="1" height="5" fill="#ff0000"/>
<rect x="434" y="450" width="6" height="1" fill="#ff0000"/>
<rect x="444" y="447" width="1" height="1" fill="#ff0000"/>
<rect x="444" y="451" width="1" height="7" fill="#ff0000"/>
<rect x="441.5" y="448.5" width="5" height="2" fill="none" stroke="#ff0000"/>
<rect x="451" y="448" width="1" height="16" fill="#008000"/>
<rect x="448" y="448" width="6" height="16" fill="#008000"/>
<rect x="458" y="459" width="1" height="5" fill="#ff0000"/>
<rect x="458" y="465" width="1" height="1" fill="#ff0000"/>
<rect x="455" y="464" width="6" height="1" fill="#ff0000"/>
<rect x="465" y="455" width="1" height="4" fill="#ff0000"/>
<rect x="465" y="467" width="1" height="1" fill="#ff0000"/>
<rect x="462.5" y="459.5" width="5" height="7" fill="none" stroke="#ff0000"/>
<rect x="472" y="445" width="1" height="1" fill="#ff0000"/>
<rect x="472" y="458" width="1" height="2" fill="#ff0000"/>
<rect x="469.5" y="446.5" width="5" height="11" fill="none" stroke="#ff0000"/>
<rect x="479" y="445" width="1" height="5" fill="#ff0000"/>
<rect x="476" y="444" width="6" height="1" fill="#ff0000"/>
<rect x="486" y="440" width="1" height="8" fill="#008000"/>
<rect x="483" y="444" width="6" height="1" fill="#008000"/>
<rect x="493" y="448" width="1" height="11" fill="#008000"/>
<rect x="490" y="448" width="6" height="4" fill="#008000"/>
<rect x="500" y="445" width="1" height="5" fill="#ff0000"/>
<rect x="500" y="458" width="1" height="1" fill="#ff0000"/>
<rect x="497.5" y="450.5" width="5" height="7" fill="none" stroke="#ff0000"/>
<rect x="507" y="449" width="1" height="8" fill="#008000"/>
<rect x="504" y="451" width="6" height="2" fill="#008000"/>
<rect x="514" y="438" width="1" height="1" fill="#ff0000"/>
<rect x="511.5" y="439.5" width="5" height="16" fill="none" stroke="#ff0000"/>
<rect x="521" y="431" width="1" height="6" fill="#ff0000"/>
<rect x="521" y="440" width="1" height="1" fill="#ff0000"/>
<rect x="518.5" y="437.5" width="5" height="2" fill="none" stroke="#ff0000"/>
<rect x="528" y="418" width="1" height="1" fill="#ff0000"/>
<rect x="525.5" y="419.5" width="5" height="16" fill="none" stroke="#ff0000"/>
<rect x="535" y="417" width="1" height="1" fill="#ff0000"/>
<rect x="532.5" y="405.5" width="5" height="11" fill="none" stroke="#ff0000"/>
<rect x="542" y="369" width="1" height="2" fill="#ff0000"/>
<rect x="539.5" y="371.5" width="5" height="27" fill="none" stroke="#ff0000"/>
<rect x="549" y="361" width="1" height="6" fill="#ff0000"/>
<rect x="549" y="370" width="1" height="5" fill="#ff0000"/>
<rect x="546.5" y="367.5" width="5" height="2" fill="none" stroke="#ff0000"/>
<rect x="556" y="360" width="1" height="9" fill="#ff0000"/>
<rect x="553" y="369" width="6" height="2" fill="#ff0000"/>
<rect x="563" y="370" width="1" height="4" fill="#ff0000"/>
<rect x="560.5" y="355.5" width="5" height="14" fill="none" stroke="#ff0000"/>
<rect x="570" y="345" width="1" height="21" fill="#008000"/>
<rect x="567" y="360" width="6" height="6" fill="#008000"/>
<rect x="577" y="340" width="1" height="1" fill="#ff0000"/>
<rect x="577" y="363" width="1" height="2" fill="#ff0000"/>
<rect x="574.5" y="341.5" width="5" height="21" fill="none" stroke="#ff0000"/>
<rect x="584" y="339" width="1" height="13" fill="#008000"/>
<rect x="581" y="340" width="6" height="3" fill="#008000"/>
<rect x="591" y="340" width="1" height="5" fill="#ff0000"/>
<rect x="591" y="348" width="1" height="13" fill="#ff0000"/>
<rect x="588.5" y="345.5" width="5" height="2" fill="none" stroke="#ff0000"/>
<rect x="598" y="343" width="1" height="23" fill="#008000"/>
<rect x="595" y="345" width="6" height="19" fill="#008000"/>
<rect x="605" y="356" width="1" height="5" fill="#ff0000"/>
<rect x="605" y="364" width="1" height="5" fill="#ff0000"/>
<rect x="602.5" y="361.5" width="5" height="2" fill="none" stroke="#ff0000"/>
<rect x="612" y="339" width="1" height="1" fill="#ff0000"/>
<rect x="609.5" y="340.5" width="5" height="16" fill="none" stroke="#ff0000"/>
<rect x="619" y="340" width="1" height="10" fill="#008000"/>
<rect x="616" y="341" width="6" height="1" fill="#008000"/>
<rect x="626" y="337" width="1" height="18" fill="#008000"/>
<rect x="623" y="341" width="6" height="1" fill="#008000"/>
<rect x="633" y="337" width="1" height="16" fill="#008000"/>
<rect x="630" y="342" width="6" height="10" fill="#008000"/>
<rect x="640" y="336" width="1" height="2" fill="#ff0000"/>
<rect x="640" y="351" width="1" height="3" fill="#ff0000"/>
<rect x="637.5" y="338.5" width="5" height="12" fill="none" stroke="#ff0000"/>
<rect x="647" y="329" width="1" height="1" fill="#ff0000"/>
<rect x="647" y="336" width="1" height="1" fill="#ff0000"/>
<rect x="644.5" y="330.5" width="5" height="5" fill="none" stroke="#ff0000"/>
<rect x="654" y="328" width="1" height="10" fill="#ff0000"/>
<rect x="651" y="326" width="6" height="2" fill="#ff0000"/>
<rect x="661" y="325" width="1" height="9" fill="#008000"/>
<rect x="658" y="328" width="6" height="1" fill="#008000"/>
<rect x="668" y="330" width="1" height="18" fill="#008000"/>
<rect x="665" y="330" width="6" height="6" fill="#008000"/>
<rect x="675" y="327" width="1" height="2" fill="#ff0000"/>
<rect x="675" y="337" width="1" height="2" fill="#ff0000"/>
<rect x="672.5" y="329.5" width="5" height="7" fill="none" stroke="#ff0000"/>
<rect x="682" y="329" width="1" height="13" fill="#008000"/>
<rect x="679" y="329" width="6" height="8" fill="#008000"/>
<rect x="689" y="335" width="1" height="21" fill="#008000"/>
<rect x="686" y="339" width="6" height="12" fill="#008000"/>
<rect x="696" y="345" width="1" height="5" fill="#ff0000"/>
<rect x="696" y="352" width="1" height="2" fill="#ff0000"/>
<rect x="693" y="350" width="6" height="2" fill="#ff0000"/>
<rect x="703" y="344" width="1" height="16" fill="#008000"/>
<rect x="700" y="349" width="6" height="10" fill="#008000"/>
<rect x="710" y="344" width="1" height="2" fill="#ff0000"/>
<rect x="710" y="357" width="1" height="4" fill="#ff0000"/>
<rect x="707.5" y="346.5" width="5" height="10" fill="none" stroke="#ff0000"/>
<rect x="717" y="332" width="1" height="1" fill="#ff0000"/>
<rect x="717" y="343" width="1" height="1" fill="#ff0000"/>
<rect x="714.5" y="333.5" width="5" height="9" fill="none" stroke="#ff0000"/>
<rect x="724" y="312" width="1" height="1" fill="#ff0000"/>
<rect x="724" y="330" width="1" height="3" fill="#ff0000"/>
<rect x="721.5" y="313.5" width="5" height="16" fill="none" stroke="#ff0000"/>
<rect x="731" y="296" width="1" height="1" fill="#ff0000"/>
<rect x="728.5" y="297.5" width="5" height="12" fill="none" stroke="#ff0000"/>
<rect x="738" y="284" width="1" height="1" fill="#ff0000"/>
<rect x="738" y="296" width="1" height="5" fill="#ff0000"/>
<rect x="735.5" y="285.5" width="5" height="10" fill="none" stroke="#ff0000"/>
<rect x="745" y="271" width="1" height="1" fill="#ff0000"/>
<rect x="745" y="282" width="1" height="3" fill="#ff0000"/>
<rect x="742.5" y="272.5" width="5" height="9" fill="none" stroke="#ff0000"/>
<rect x="752" y="269" width="1" height="10" fill="#008000"/>
<rect x="749" y="271" width="6" height="1" fill="#008000"/>
<rect x="759" y="276" width="1" height="9" fill="#008000"/>
<rect x="756" y="277" width="6" height="1" fill="#008000"/>
<rect x="766" y="262" width="1" height="24" fill="#008000"/>
<rect x="763" y="279" width="6" height="3" fill="#008000"/>
<rect x="773" y="284" width="1" height="4" fill="#ff0000"/>
<rect x="770.5" y="268.5" width="5" height="15" fill="none" stroke="#ff0000"/>
<rect x="780" y="269" width="1" height="6" fill="#ff0000"/>
<rect x="777.5" y="263.5" width="5" height="5" fill="none" stroke="#ff0000"/>
<rect x="787" y="259" width="1" height="35" fill="#008000"/>
<rect x="784" y="262" width="6" height="30" fill="#008000"/>
<rect x="794" y="290" width="1" height="11" fill="#ff0000"/>
<rect x="791.5" y="285.5" width="5" height="4" fill="none" stroke="#ff0000"/>
<rect x="801" y="276" width="1" height="3" fill="#ff0000"/>
<rect x="801" y="287" width="1" height="4" fill="#ff0000"/>
<rect x="798.5" y="279.5" width="5" height="7" fill="none" stroke="#ff0000"/>
<rect x="808" y="269" width="1" height="1" fill="#ff0000"/>
<rect x="808" y="280" width="1" height="6" fill="#ff0000"/>
<rect x="805.5" y="270.5" width="5" height="9" fill="none" stroke="#ff0000"/>
<rect x="815" y="274" width="1" height="26" fill="#008000"/>
<rect x="812" y="274" width="6" height="22" fill="#008000"/>
<rect x="822" y="282" width="1" height="1" fill="#ff0000"/>
<rect x="819.5" y="283.5" width="5" height="13" fill="none" stroke="#ff0000"/>
<rect x="829" y="259" width="1" height="2" fill="#ff0000"/>
<rect x="829" y="288" width="1" height="3" fill="#ff0000"/>
<rect x="826.5" y="261.5" width="5" height="26" fill="none" stroke="#ff0000"/>
<rect x="836" y="247" width="1" height="18" fill="#008000"/>
<rect x="833" y="254" width="6" height="6" fill="#008000"/>
<rect x="843" y="256" width="1" height="2" fill="#ff0000"/>
<rect x="843" y="263" width="1" height="7" fill="#ff0000"/>
<rect x="840.5" y="258.5" width="5" height="4" fill="none" stroke="#ff0000"/>
<rect x="850" y="248" width="1" height="3" fill="#ff0000"/>
<rect x="850" y="254" width="1" height="5" fill="#ff0000"/>
<rect x="847.5" y="251.5" width="5" height="2" fill="none" stroke="#ff0000"/>
<rect x="857" y="246" width="1" height="1" fill="#ff0000"/>
<rect x="857" y="249" width="1" height="4" fill="#ff0000"/>
<rect x="854" y="247" width="6" height="2" fill="#ff0000"/>
<rect x="864" y="244" width="1" height="9" fill="#ff0000"/>
<rect x="861.5" y="234.5" width="5" height="9" fill="none" stroke="#ff0000"/>
<rect x="871" y="229" width="1" height="1" fill="#ff0000"/>
<rect x="871" y="234" width="1" height="11" fill="#ff0000"/>
<rect x="868.5" y="230.5" width="5" height="3" fill="none" stroke="#ff0000"/>
<rect x="878" y="233" width="1" height="13" fill="#008000"/>
<rect x="875" y="236" width="6" height="4" fill="#008000"/>
<rect x="885" y="245" width="1" height="17" fill="#008000"/>
<rect x="882" y="245" width="6" height="1" fill="#008000"/>
<rect x="892" y="237" width="1" height="20" fill="#008000"/>
<rect x="889" y="248" width="6" height="2" fill="#008000"/>
<rect x="899" y="250" width="1" height="10" fill="#ff0000"/>
<rect x="896.5" y="240.5" width="5" height="9" fill="none" stroke="#ff0000"/>
<rect x="906" y="231" width="1" height="23" fill="#008000"/>
<rect x="903" y="249" width="6" height="3" fill="#008000"/>
<rect x="913" y="250" width="1" height="31" fill="#008000"/>
<rect x="910" y="254" width="6" height="8" fill="#008000"/>
<rect x="920" y="251" width="1" height="2" fill="#ff0000"/>
<rect x="920" y="259" width="1" height="4" fill="#ff0000"/>
<rect x="917.5" y="253.5" width="5" height="5" fill="none" stroke="#ff0000"/>
<rect x="927" y="249" width="1" height="16" fill="#008000"/>
<rect x="924" y="253" width="6" height="10" fill="#008000"/>
<rect x="934" y="256" width="1" height="17" fill="#008000"/>
<rect x="931" y="263" width="6" height="9" fill="#008000"/>
<rect x="941" y="271" width="1" height="20" fill="#008000"/>
<rect x="938" y="275" width="6" height="13" fill="#008000"/>
<rect x="948" y="281" width="1" height="11" fill="#008000"/>
<rect x="945" y="288" width="6" height="1" fill="#008000"/>
<rect x="955" y="294" width="1" height="9" fill="#008000"/>
<rect x="952" y="294" width="6" height="2" fill="#008000"/>
<rect x="959.5" y="264.5" width="5" height="29" fill="none" stroke="#ff0000"/>
<rect x="969" y="235" width="1" height="6" fill="#ff0000"/>
<rect x="969" y="260" width="1" height="3" fill="#ff0000"/>
<rect x="966.5" y="241.5" width="5" height="18" fill="none" stroke="#ff0000"/>
<rect x="976" y="225" width="1" height="4" fill="#ff0000"/>
<rect x="976" y="242" width="1" height="4" fill="#ff0000"/>
<rect x="973.5" y="229.5" width="5" height="12" fill="none" stroke="#ff0000"/>
<rect x="983" y="207" width="1" height="2" fill="#ff0000"/>
<rect x="983" y="227" width="1" height="6" fill="#ff0000"/>
<rect x="980.5" y="209.5" width="5" height="17" fill="none" stroke="#ff0000"/>
<rect x="990" y="198" width="1" height="5" fill="#ff0000"/>
<rect x="990" y="206" width="1" height="5" fill="#ff0000"/>
<rect x="987.5" y="203.5" width="5" height="2" fill="none" stroke="#ff0000"/>
<rect x="997" y="199" width="1" height="3" fill="#ff0000"/>
<rect x="997" y="204" width="1" height="7" fill="#ff0000"/>
<rect x="994" y="202" width="6" height="2" fill="#ff0000"/>
<rect x="1004" y="201" width="1" height="12" fill="#008000"/>
<rect x="1001" y="201" width="6" height="9" fill="#008000"/>
<rect x="1011" y="205" width="1" height="1" fill="#ff0000"/>
<rect x="1011" y="210" width="1" height="12" fill="#ff0000"/>
<rect x="1008.5" y="206.5" width="5" height="3" fill="none" stroke="#ff0000"/>
<rect x="1018" y="188" width="1" height="30" fill="#008000"/>
<rect x="1015" y="204" width="6" height="7" fill="#008000"/>
<rect x="1025" y="199" width="1" height="5" fill="#ff0000"/>
<rect x="1022.5" y="174.5" width="5" height="24" fill="none" stroke="#ff0000"/>
<rect x="70" y="568" width="6" height="20" fill="#008000"/>
<rect x="77.5" y="568.5" width="5" height="19" fill="none" stroke="#ff0000"/>
<rect x="84" y="572" width="6" height="16" fill="#008000"/>
<rect x="91" y="572" width="6" height="16" fill="#008000"/>
<rect x="98" y="569" width="6" height="19" fill="#008000"/>
<rect x="105" y="570" width="6" height="18" fill="#008000"/>
<rect x="112.5" y="573.5" width="5" height="14" fill="none" stroke="#ff0000"/>
<rect x="119.5" y="573.5" width="5" height="14" fill="none" stroke="#ff0000"/>
<rect x="126.5" y="572.5" width="5" height="15" fill="none" stroke="#ff0000"/>
<rect x="133.5" y="573.5" width="5" height="14" fill="none" stroke="#ff0000"/>
<rect x="140" y="573" width="6" height="15" fill="#008000"/>
<rect x="147.5" y="572.5" width="5" height="15" fill="none" stroke="#ff0000"/>
<rect x="154" y="573" width="6" height="15" fill="#008000"/>
<rect x="161.5" y="565.5" width="5" height="22" fill="none" stroke="#ff0000"/>
<rect x="168" y="568" width="6" height="20" fill="#008000"/>
<rect x="175" y="573" width="6" height="15" fill="#008000"/>
<rect x="182" y="573" width="6" height="15" fill="#008000"/>
<rect x="189.5" y="575.5" width="5" height="12" fill="none" stroke="#ff0000"/>
<rect x="196" y="575" width="6" height="13" fill="#008000"/>
<rect x="203" y="576" width="6" height="12" fill="#008000"/>
<rect x="210.5" y="575.5" width="5" height="12" fill="none" stroke="#ff0000"/>
<rect x="217" y="573" width="6" height="15" fill="#008000"/>
<rect x="224.5" y="575.5" width="5" height="12" fill="none" stroke="#ff0000"/>
<rect x="231" y="574" width="6" height="14" fill="#008000"/>
<rect x="238" y="574" width="6" height="14" fill="#008000"/>
<rect x="245.5" y="572.5" width="5" height="15" fill="none" stroke="#ff0000"/>
<rect x="252" y="572" width="6" height="16" fill="#008000"/>
<rect x="259" y="573" width="6" height="15" fill="#008000"/>
<rect x="266" y="573" width="6" height="15" fill="#008000"/>
<rect x="273" y="573" width="6" height="15" fill="#008000"/>
<rect x="280.5" y="574.5" width="5" height="13" fill="none" stroke="#ff0000"/>
<rect x="287" y="575" width="6" height="13" fill="#008000"/>
<rect x="294.5" y="575.5" width="5" height="12" fill="none" stroke="#ff0000"/>
<rect x="301.5" y="572.5" width="5" height="15" fill="none" stroke="#ff0000"/>
<rect x="308.5" y="573.5" width="5" height="14" fill="none" stroke="#ff0000"/>
<rect x="315.5" y="571.5" width="5" height="16" fill="none" stroke="#ff0000"/>
<rect x="322.5" y="568.5" width="5" height="19" fill="none" stroke="#ff0000"/>
<rect x="329.5" y="569.5" width="5" height="18" fill="none" stroke="#ff0000"/>
<rect x="336" y="570" width="6" height="18" fill="#008000"/>
<rect x="343" y="570" width="6" height="18" fill="#008000"/>
<rect x="350" y="569" width="6" height="19" fill="#008000"/>
<rect x="357.5" y="574.5" width="5" height="13" fill="none" stroke="#ff0000"/>
<rect x="364" y="574" width="6" height="14" fill="#008000"/>
<rect x="371.5" y="574.5" width="5" height="13" fill="none" stroke="#ff0000"/>
<rect x="378" y="574" width="6" height="14" fill="#008000"/>
<rect x="385.5" y="572.5" width="5" height="15" fill="none" stroke="#ff0000"/>
<rect x="392.5" y="568.5" width="5" height="19" fill="none" stroke="#ff0000"/>
<rect x="399.5" y="568.5" width="5" height="19" fill="none" stroke="#ff0000"/>
<rect x="406" y="568" width="6" height="20" fill="#008000"/>
<rect x="413.5" y="566.5" width="5" height="21" fill="none" stroke="#ff0000"/>
<rect x="420.5" y="563.5" width="5" height="24" fill="none" stroke="#ff0000"/>
<rect x="427" y="567" width="6" height="21" fill="#008000"/>
<rect x="434.5" y="568.5" width="5" height="19" fill="none" stroke="#ff0000"/>
<rect x="441.5" y="569.5" width="5" height="18" fill="none" stroke="#ff0000"/>
<rect x="448" y="565" width="6" height="23" fill="#008000"/>
<rect x="455.5" y="568.5" width="5" height="19" fill="none" stroke="#ff0000"/>
<rect x="462.5" y="567.5" width="5" height="20" fill="none" stroke="#ff0000"/>
<rect x="469.5" y="565.5" width="5" height="22" fill="none" stroke="#ff0000"/>
<rect x="476.5" y="563.5" width="5" height="24" fill="none" stroke="#ff0000"/>
<rect x="483" y="560" width="6" height="28" fill="#008000"/>
<rect x="490" y="567" width="6" height="21" fill="#008000"/>
<rect x="497.5" y="566.5" width="5" height="21" fill="none" stroke="#ff0000"/>
<rect x="504" y="569" width="6" height="19" fill="#008000"/>
<rect x="511.5" y="563.5" width="5" height="24" fill="none" stroke="#ff0000"/>
<rect x="518.5" y="560.5" width="5" height="27" fill="none" stroke="#ff0000"/>
<rect x="525.5" y="554.5" width="5" height="33" fill="none" stroke="#ff0000"/>
<rect x="532.5" y="559.5" width="5" height="28" fill="none" stroke="#ff0000"/>
<rect x="539.5" y="540.5" width="5" height="47" fill="none" stroke="#ff0000"/>
<rect x="546.5" y="547.5" width="5" height="40" fill="none" stroke="#ff0000"/>
<rect x="553.5" y="551.5" width="5" height="36" fill="none" stroke="#ff0000"/>
<rect x="560.5" y="555.5" width="5" height="32" fill="none" stroke="#ff0000"/>
<rect x="567" y="549" width="6" height="39" fill="#008000"/>
<rect x="574.5" y="553.5" width="5" height="34" fill="none" stroke="#ff0000"/>
<rect x="581" y="552" width="6" height="36" fill="#008000"/>
<rect x="588.5" y="552.5" width="5" height="35" fill="none" stroke="#ff0000"/>
<rect x="595" y="552" width="6" height="36" fill="#008000"/>
<rect x="602.5" y="561.5" width="5" height="26" fill="none" stroke="#ff0000"/>
<rect x="609.5" y="557.5" width="5" height="30" fill="none" stroke="#ff0000"/>
<rect x="616" y="557" width="6" height="31" fill="#008000"/>
<rect x="623" y="552" width="6" height="36" fill="#008000"/>
<rect x="630" y="554" width="6" height="34" fill="#008000"/>
<rect x="637.5" y="558.5" width="5" height="29" fill="none" stroke="#ff0000"/>
<rect x="644.5" y="555.5" width="5" height="32" fill="none" stroke="#ff0000"/>
<rect x="651.5" y="552.5" width="5" height="35" fill="none" stroke="#ff0000"/>
<rect x="658" y="554" width="6" height="34" fill="#008000"/>
<rect x="665" y="554" width="6" height="34" fill="#008000"/>
<rect x="672.5" y="556.5" width="5" height="31" fill="none" stroke="#ff0000"/>
<rect x="679" y="555" width="6" height="33" fill="#008000"/>
<rect x="686" y="555" width="6" height="33" fill="#008000"/>
<rect x="693.5" y="564.5" width="5" height="23" fill="none" stroke="#ff0000"/>
<rect x="700" y="563" width="6" height="25" fill="#008000"/>
<rect x="707.5" y="567.5" width="5" height="20" fill="none" stroke="#ff0000"/>
<rect x="714.5" y="562.5" width="5" height="25" fill="none" stroke="#ff0000"/>
<rect x="721.5" y="549.5" width="5" height="38" fill="none" stroke="#ff0000"/>
<rect x="728.5" y="545.5" width="5" height="42" fill="none" stroke="#ff0000"/>
<rect x="735.5" y="548.5" width="5" height="39" fill="none" stroke="#ff0000"/>
<rect x="742.5" y="545.5" width="5" height="42" fill="none" stroke="#ff0000"/>
<rect x="749" y="548" width="6" height="40" fill="#008000"/>
<rect x="756" y="550" width="6" height="38" fill="#008000"/>
<rect x="763" y="543" width="6" height="45" fill="#008000"/>
<rect x="770.5" y="549.5" width="5" height="38" fill="none" stroke="#ff0000"/>
<rect x="777.5" y="544.5" width="5" height="43" fill="none" stroke="#ff0000"/>
<rect x="784" y="527" width="6" height="61" fill="#008000"/>
<rect x="791.5" y="545.5" width="5" height="42" fill="none" stroke="#ff0000"/>
<rect x="798.5" y="550.5" width="5" height="37" fill="none" stroke="#ff0000"/>
<rect x="805.5" y="553.5" width="5" height="34" fill="none" stroke="#ff0000"/>
<rect x="812" y="552" width="6" height="36" fill="#008000"/>
<rect x="819.5" y="556.5" width="5" height="31" fill="none" stroke="#ff0000"/>
<rect x="826.5" y="543.5" width="5" height="44" fill="none" stroke="#ff0000"/>
<rect x="833" y="542" width="6" height="46" fill="#008000"/>
<rect x="840.5" y="553.5" width="5" height="34" fill="none" stroke="#ff0000"/>
<rect x="847.5" y="547.5" width="5" height="40" fill="none" stroke="#ff0000"/>
<rect x="854.5" y="549.5" width="5" height="38" fill="none" stroke="#ff0000"/>
<rect x="861.5" y="547.5" width="5" height="40" fill="none" stroke="#ff0000"/>
<rect x="868.5" y="540.5" width="5" height="47" fill="none" stroke="#ff0000"/>
<rect x="875" y="542" width="6" height="46" fill="#008000"/>
<rect x="882" y="547" width="6" height="41" fill="#008000"/>
<rect x="889" y="548" width="6" height="40" fill="#008000"/>
<rect x="896.5" y="547.5" width="5" height="40" fill="none" stroke="#ff0000"/>
<rect x="903" y="538" width="6" height="50" fill="#008000"/>
<rect x="910" y="545" width="6" height="43" fill="#008000"/>
<rect x="917.5" y="556.5" width="5" height="31" fill="none" stroke="#ff0000"/>
<rect x="924" y="554" width="6" height="34" fill="#008000"/>
<rect x="931" y="557" width="6" height="31" fill="#008000"/>
<rect x="938" y="555" width="6" height="33" fill="#008000"/>
<rect x="945" y="561" width="6" height="27" fill="#008000"/>
<rect x="952" y="562" width="6" height="26" fill="#008000"/>
<rect x="959.5" y="552.5" width="5" height="35" fill="none" stroke="#ff0000"/>
<rect x="966.5" y="534.5" width="5" height="53" fill="none" stroke="#ff0000"/>
<rect x="973.5" y="528.5" width="5" height="59" fill="none" stroke="#ff0000"/>
<rect x="980.5" y="522.5" width="5" height="65" fill="none" stroke="#ff0000"/>
<rect x="987.5" y="527.5" width="5" height="60" fill="none" stroke="#ff0000"/>
<rect x="994.5" y="525.5" width="5" height="62" fill="none" stroke="#ff0000"/>
<rect x="1001" y="535" width="6" height="53" fill="#008000"/>
<rect x="1008.5" y="543.5" width="5" height="44" fill="none" stroke="#ff0000"/>
<rect x="1015" y="529" width="6" height="59" fill="#008000"/>
<rect x="1022.5" y="527.5" width="5" height="60" fill="none" stroke="#ff0000"/>
<rect x="80" y="654" width="1" height="5" fill="#008000"/>
<rect x="87" y="654" width="1" height="8" fill="#008000"/>
<rect x="94" y="654" width="1" height="12" fill="#008000"/>
<rect x="101" y="654" width="1" height="16" fill="#008000"/>
<rect x="108" y="654" width="1" height="23" fill="#008000"/>
<rect x="115" y="654" width="1" height="24" fill="#008000"/>
<rect x="122" y="654" width="1" height="22" fill="#008000"/>
<rect x="129" y="654" width="1" height="19" fill="#008000"/>
<rect x="136" y="654" width="1" height="17" fill="#008000"/>
<rect x="143" y="654" width="1" height="17" fill="#008000"/>
<rect x="150" y="654" width="1" height="16" fill="#008000"/>
<rect x="157" y="654" width="1" height="14" fill="#008000"/>
<rect x="164" y="654" width="1" height="6" fill="#008000"/>
<rect x="171" y="654" width="1" height="2" fill="#008000"/>
<rect x="178" y="653" width="1" height="2" fill="#ff0000"/>
<rect x="185" y="653" width="1" height="2" fill="#ff0000"/>
<rect x="199" y="654" width="1" height="2" fill="#008000"/>
<rect x="206" y="654" width="1" height="3" fill="#008000"/>
<rect x="213" y="654" width="1" height="2" fill="#008000"/>
<rect x="220" y="654" width="1" height="2" fill="#008000"/>
<rect x="227" y="653" width="1" height="2" fill="#ff0000"/>
<rect x="234" y="650" width="1" height="5" fill="#ff0000"/>
<rect x="241" y="649" width="1" height="6" fill="#ff0000"/>
<rect x="248" y="647" width="1" height="8" fill="#ff0000"/>
<rect x="255" y="646" width="1" height="9" fill="#ff0000"/>
<rect x="262" y="647" width="1" height="8" fill="#ff0000"/>
<rect x="269" y="648" width="1" height="7" fill="#ff0000"/>
<rect x="276" y="650" width="1" height="5" fill="#ff0000"/>
<rect x="283" y="650" width="1" height="5" fill="#ff0000"/>
<rect x="290" y="651" width="1" height="4" fill="#ff0000"/>
<rect x="297" y="652" width="1" height="3" fill="#ff0000"/>
<rect x="304" y="650" width="1" height="5" fill="#ff0000"/>
<rect x="311" y="648" width="1" height="7" fill="#ff0000"/>
<rect x="318" y="648" width="1" height="7" fill="#ff0000"/>
<rect x="325" y="645" width="1" height="10" fill="#ff0000"/>
<rect x="332" y="642" width="1" height="13" fill="#ff0000"/>
<rect x="339" y="643" width="1" height="12" fill="#ff0000"/>
<rect x="346" y="646" width="1" height="9" fill="#ff0000"/>
<rect x="353" y="653" width="1" height="2" fill="#ff0000"/>
<rect x="360" y="654" width="1" height="2" fill="#008000"/>
<rect x="367" y="654" width="1" height="4" fill="#008000"/>
<rect x="374" y="654" width="1" height="5" fill="#008000"/>
<rect x="381" y="654" width="1" height="6" fill="#008000"/>
<rect x="388" y="654" width="1" height="5" fill="#008000"/>
<rect x="395" y="654" width="1" height="4" fill="#008000"/>
<rect x="416" y="652" width="1" height="3" fill="#ff0000"/>
<rect x="423" y="650" width="1" height="5" fill="#ff0000"/>
<rect x="430" y="650" width="1" height="5" fill="#ff0000"/>
<rect x="437" y="650" width="1" height="5" fill="#ff0000"/>
<rect x="444" y="648" width="1" height="7" fill="#ff0000"/>
<rect x="451" y="653" width="1" height="2" fill="#ff0000"/>
<rect x="458" y="654" width="1" height="2" fill="#008000"/>
<rect x="465" y="654" width="1" height="2" fill="#008000"/>
<rect x="472" y="653" width="1" height="2" fill="#ff0000"/>
<rect x="479" y="651" width="1" height="4" fill="#ff0000"/>
<rect x="486" y="651" width="1" height="4" fill="#ff0000"/>
<rect x="493" y="652" width="1" height="3" fill="#ff0000"/>
<rect x="500" y="653" width="1" height="2" fill="#ff0000"/>
<rect x="507" y="653" width="1" height="2" fill="#ff0000"/>
<rect x="514" y="652" width="1" height="3" fill="#ff0000"/>
<rect x="521" y="651" width="1" height="4" fill="#ff0000"/>
<rect x="528" y="646" width="1" height="9" fill="#ff0000"/>
<rect x="535" y="641" width="1" height="14" fill="#ff0000"/>
<rect x="542" y="631" width="1" height="24" fill="#ff0000"/>
<rect x="549" y="625" width="1" height="30" fill="#ff0000"/>
<rect x="556" y="624" width="1" height="31" fill="#ff0000"/>
<rect x="563" y="623" width="1" height="32" fill="#ff0000"/>
<rect x="570" y="626" width="1" height="29" fill="#ff0000"/>
<rect x="577" y="625" width="1" height="30" fill="#ff0000"/>
<rect x="584" y="626" width="1" height="29" fill="#ff0000"/>
<rect x="591" y="630" width="1" height="25" fill="#ff0000"/>
<rect x="598" y="638" width="1" height="17" fill="#ff0000"/>
<rect x="605" y="644" width="1" height="11" fill="#ff0000"/>
<rect x="612" y="645" width="1" height="10" fill="#ff0000"/>
<rect x="619" y="647" width="1" height="8" fill="#ff0000"/>
<rect x="626" y="649" width="1" height="6" fill="#ff0000"/>
<rect x="633" y="653" width="1" height="2" fill="#ff0000"/>
<rect x="654" y="653" width="1" height="2" fill="#ff0000"/>
<rect x="661" y="654" width="1" height="2" fill="#008000"/>
<rect x="668" y="654" width="1" height="4" fill="#008000"/>
<rect x="675" y="654" width="1" height="5" fill="#008000"/>
<rect x="682" y="654" width="1" height="7" fill="#008000"/>
<rect x="689" y="654" width="1" height="13" fill="#008000"/>
<rect x="696" y="654" width="1" height="16" fill="#008000"/>
<rect x="703" y="654" width="1" height="19" fill="#008000"/>
<rect x="710" y="654" width="1" height="18" fill="#008000"/>
<rect x="717" y="654" width="1" height="14" fill="#008000"/>
<rect x="724" y="654" width="1" height="8" fill="#008000"/>
<rect x="738" y="648" width="1" height="7" fill="#ff0000"/>
<rect x="745" y="642" width="1" height="13" fill="#ff0000"/>
<rect x="752" y="640" width="1" height="15" fill="#ff0000"/>
<rect x="759" y="641" width="1" height="14" fill="#ff0000"/>
<rect x="766" y="644" width="1" height="11" fill="#ff0000"/>
<rect x="773" y="644" width="1" height="11" fill="#ff0000"/>
<rect x="780" y="644" width="1" height="11" fill="#ff0000"/>
<rect x="787" y="652" width="1" height="3" fill="#ff0000"/>
<rect x="794" y="654" width="1" height="2" fill="#008000"/>
<rect x="801" y="654" width="1" height="3" fill="#008000"/>
<rect x="808" y="654" width="1" height="3" fill="#008000"/>
<rect x="815" y="654" width="1" height="9" fill="#008000"/>
<rect x="822" y="654" width="1" height="10" fill="#008000"/>
<rect x="829" y="654" width="1" height="6" fill="#008000"/>
<rect x="836" y="654" width="1" height="4" fill="#008000"/>
<rect x="843" y="654" width="1" height="2" fill="#008000"/>
<rect x="850" y="654" width="1" height="2" fill="#008000"/>
<rect x="857" y="653" width="1" height="2" fill="#ff0000"/>
<rect x="864" y="651" width="1" height="4" fill="#ff0000"/>
<rect x="871" y="649" width="1" height="6" fill="#ff0000"/>
<rect x="878" y="651" width="1" height="4" fill="#ff0000"/>
<rect x="885" y="653" width="1" height="2" fill="#ff0000"/>
<rect x="892" y="654" width="1" height="3" fill="#008000"/>
<rect x="899" y="654" width="1" height="4" fill="#008000"/>
<rect x="906" y="654" width="1" height="7" fill="#008000"/>
<rect x="913" y="654" width="1" height="12" fill="#008000"/>
<rect x="920" y="654" width="1" height="12" fill="#008000"/>
<rect x="927" y="654" width="1" height="15" fill="#008000"/>
<rect x="934" y="654" width="1" height="18" fill="#008000"/>
<rect x="941" y="654" width="1" height="23" fill="#008000"/>
<rect x="948" y="654" width="1" height="26" fill="#008000"/>
<rect x="955" y="654" width="1" height="28" fill="#008000"/>
<rect x="962" y="654" width="1" height="21" fill="#008000"/>
<rect x="969" y="654" width="1" height="12" fill="#008000"/>
<rect x="976" y="654" width="1" height="2" fill="#008000"/>
<rect x="983" y="648" width="1" height="7" fill="#ff0000"/>
<rect x="990" y="641" width="1" height="14" fill="#ff0000"/>
<rect x="997" y="638" width="1" height="17" fill="#ff0000"/>
<rect x="1004" y="638" width="1" height="17" fill="#ff0000"/>
<rect x="1011" y="639" width="1" height="16" fill="#ff0000"/>
<rect x="1018" y="642" width="1" height="13" fill="#ff0000"/>
<rect x="1025" y="637" width="1" height="18" fill="#ff0000"/>
<rect x="1032" y="635" width="1" height="20" fill="#ff0000"/>
<rect x="1039" y="635" width="1" height="20" fill="#ff0000"/>
<rect x="1046" y="637" width="1" height="18" fill="#ff0000"/>
<rect x="1053" y="640" width="1" height="15" fill="#ff0000"/>
<rect x="1060" y="643" width="1" height="12" fill="#ff0000"/>
<rect x="1067" y="646" width="1" height="9" fill="#ff0000"/>
<rect x="1074" y="650" width="1" height="5" fill="#ff0000"/>
<rect x="1081" y="652" width="1" height="3" fill="#ff0000"/>
<rect x="1095" y="654" width="1" height="2" fill="#008000"/>
<rect x="1102" y="654" width="1" height="5" fill="#008000"/>
<rect x="1109" y="654" width="1" height="6" fill="#008000"/>
<rect x="1116" y="654" width="1" height="8" fill="#008000"/>
<rect x="1123" y="654" width="1" height="8" fill="#008000"/>
<rect x="1130" y="654" width="1" height="10" fill="#008000"/>
<rect x="1137" y="654" width="1" height="10" fill="#008000"/>
<rect x="1144" y="654" width="1" height="11" fill="#008000"/>
<rect x="1151" y="654" width="1" height="11" fill="#008000"/>
<rect x="1158" y="654" width="1" height="11" fill="#008000"/>
<rect x="1165" y="654" width="1" height="11" fill="#008000"/>
<rect x="1172" y="654" width="1" height="11" fill="#008000"/>
<rect x="1179" y="654" width="1" height="10" fill="#008000"/>
<rect x="1186" y="654" width="1" height="10" fill="#008000"/>
<rect x="1193" y="654" width="1" height="9" fill="#008000"/>
<rect x="1200" y="654" width="1" height="9" fill="#008000"/>
<rect x="1207" y="654" width="1" height="9" fill="#008000"/>
<rect x="1214" y="654" width="1" height="9" fill="#008000"/>
<rect x="1221" y="654" width="1" height="8" fill="#008000"/>
<rect x="1228" y="654" width="1" height="8" fill="#008000"/>
<rect x="1235" y="654" width="1" height="8" fill="#008000"/>
<polyline points="73.3,639.5 93.3,643 103.3,645.8 123.3,653.7 143.3,660.3 156.7,664.2 166.7,664.5 180,664.2 193.3,664.7 200,665.8 221.7,666.3 240,664.2 260,661.3 280,659.2 300,658 323.3,655 338.3,652 346.7,650.3 353.3,650.3 366.7,651.7 383.3,653.3 400,654.5 416.7,654.2 433.3,653 443.3,651.3 466.7,651.3 486.7,650.3 510,650 523.3,649.2 535,646.7 543.3,642 556.7,635 570,628.3 583.3,621.7 593.3,616.7 600,615.2 613.3,612.5 626.7,611.2 656.7,611.2 676.7,612.5 690,615.8 706.7,620.8 721.7,624.5 731.7,624.5 741.7,623.3 760,618.3 773.3,615.8 780,614.2 800,614.7 810,615.5 826.7,618.3 843.3,619.2 858.3,619.2 876.7,617.2 886.7,617.2 903.3,619.2 920,622.5 936.7,627 950,633.7 961.7,639.2 973.3,641.2 983.3,640 996.7,636.3 1000,636 1023.3,628.8 1042.7,622 1064.1,616.2 1085.5,615.2 1104.9,616.2 1124.3,619.1 1155.4,625 1184.5,630.8 1213.6,636.2 1235,639.5" fill="none" stroke="#0000ff" stroke-width="1" shape-rendering="crispEdges"/>
<polyline points="73.3,640 86.7,644.2 100,651.3 108.3,658.7 115,662.5 123.3,664.5 130,666.2 136.7,666.3 143.3,669.7 150,670.8 156.7,671.3 166.7,666.3 173.3,664.2 180,663.3 193.3,664.7 200,666.3 206.7,667.2 221.7,665.8 233.3,662.5 253.3,658.3 260,657.5 296.7,657.5 306.7,655 323.3,651.3 332.5,646.7 346.7,646.7 360,652.5 366.7,654.2 380,656.2 396.7,656.2 400,655.3 410,654.2 420,651.7 433.3,649.7 443.3,648.3 453.3,650.8 465,652.5 473.3,650.3 486.7,648.3 493.3,649.5 510,649.5 520,647.8 528.3,644.2 535,639.7 543.3,630 550,624.7 561.7,616.7 570,613.8 583.3,606.7 590,605.3 598.3,607.5 606.7,609.2 611.7,608 626.7,608 633.3,611.3 656.7,611.3 666.7,614.2 676.7,615.8 683.3,618.3 693.3,624.2 703.3,629.7 710,631.3 718.3,631.3 730,625 741.7,618.3 753.3,612.5 760,611.2 766.7,611.2 780,609.2 788.3,613 801.7,616.3 808.3,616.3 821.7,622.5 833.3,620.5 846.7,620 858.3,619.2 871.7,615.3 880,615.3 893.3,619.7 900,620.5 916.7,627.5 933.3,635 946.7,645 955,650 961.7,650.3 968.3,647.2 980,640 990,630.8 1000,626.4 1015.5,624 1025.2,619.1 1035,614.3 1050.5,611 1062.1,611 1077.7,613.7 1108.8,620.1 1135.9,627.3 1167,633.7 1194.2,638.6 1213.6,640.9 1225.3,642.8 1235,643.4" fill="none" stroke="#000" stroke-width="1" shape-rendering="crispEdges"/>
<text x="1235" y="168.5" font-size="11" fill="#ff0000" text-anchor="end" font-family="Liberation Sans, sans-serif" textLength="59.8" lengthAdjust="spacingAndGlyphs">300.0%(0)</text>
<text x="1235" y="174.5" font-size="11" fill="#800080" text-anchor="end" font-family="Liberation Sans, sans-serif" textLength="73.8" lengthAdjust="spacingAndGlyphs">150.0%(180)</text>
<text x="1235" y="197.5" font-size="11" fill="#a0c8f0" text-anchor="end" font-family="Liberation Sans, sans-serif" textLength="73.8" lengthAdjust="spacingAndGlyphs">275.0%(270)</text>
<text x="1235" y="219.5" font-size="11" fill="#0000ff" text-anchor="end" font-family="Liberation Sans, sans-serif" textLength="80.8" lengthAdjust="spacingAndGlyphs">133.33%(120)</text>
<text x="1235" y="282.5" font-size="11" fill="#ff0000" text-anchor="end" font-family="Liberation Sans, sans-serif" textLength="59.8" lengthAdjust="spacingAndGlyphs">200.0%(0)</text>
<text x="1235" y="311.5" font-size="11" fill="#a0c8f0" text-anchor="end" font-family="Liberation Sans, sans-serif" textLength="73.8" lengthAdjust="spacingAndGlyphs">175.0%(270)</text>
<text x="1235" y="313.5" font-size="11" fill="#ff0000" text-anchor="end" font-family="Liberation Sans, sans-serif" textLength="59.8" lengthAdjust="spacingAndGlyphs">100.0%(0)</text>
<text x="1235" y="396.5" font-size="11" fill="#ff0000" text-anchor="end" font-family="Liberation Sans, sans-serif" textLength="59.8" lengthAdjust="spacingAndGlyphs">100.0%(0)</text>
<text x="1235" y="407.5" font-size="11" fill="#808080" text-anchor="end" font-family="Liberation Sans, sans-serif" textLength="73.8" lengthAdjust="spacingAndGlyphs">66.67%(240)</text>
<text x="1235" y="425.5" font-size="11" fill="#a0c8f0" text-anchor="end" font-family="Liberation Sans, sans-serif" textLength="66.8" lengthAdjust="spacingAndGlyphs">75.0%(270)</text>
<text x="1235" y="453.5" font-size="11" fill="#800080" text-anchor="end" font-family="Liberation Sans, sans-serif" textLength="66.8" lengthAdjust="spacingAndGlyphs">50.0%(180)</text>
<text x="1235" y="500.5" font-size="11" fill="#0000ff" text-anchor="end" font-family="Liberation Sans, sans-serif" textLength="73.8" lengthAdjust="spacingAndGlyphs">33.33%(120)</text>
<rect x="349" y="168" width="30" height="11" fill="#fff"/>
<text x="349" y="177.4" font-size="12" fill="#0000ff" text-anchor="start" font-family="Liberation Mono, monospace" textLength="29.5" lengthAdjust="spacingAndGlyphs">1.382</text>
<rect x="492" y="168" width="18" height="11" fill="#fff"/>
<text x="492" y="177.4" font-size="12" fill="#008080" text-anchor="start" font-family="Liberation Mono, monospace" textLength="17.5" lengthAdjust="spacingAndGlyphs">1.5</text>
<rect x="634" y="168" width="30" height="11" fill="#fff"/>
<text x="634" y="177.4" font-size="12" fill="#800080" text-anchor="start" font-family="Liberation Mono, monospace" textLength="29.5" lengthAdjust="spacingAndGlyphs">1.618</text>
<rect x="1096.5" y="168" width="6" height="11" fill="#fff"/>
<text x="1096.5" y="177.4" font-size="12" fill="#ff0000" text-anchor="start" font-family="Liberation Mono, monospace" textLength="5.5" lengthAdjust="spacingAndGlyphs">2</text>
<polyline points="213.5,496 233,490.5" fill="none" stroke="#0000ff" stroke-width="1"/>
<text x="234" y="493" font-size="11" fill="#0000ff" text-anchor="start" font-family="Liberation Sans, sans-serif" textLength="58" lengthAdjust="spacingAndGlyphs">1991.0601</text>
<polyline points="1025.5,173.5 1029,173.5 1040,176 1045,178.5" fill="none" stroke="#0000ff" stroke-width="1"/>
<text x="1046" y="189" font-size="11" fill="#0000ff" text-anchor="start" font-family="Liberation Sans, sans-serif" textLength="58" lengthAdjust="spacingAndGlyphs">2474.1599</text>
<text x="70.5" y="389.3" font-size="12" fill="#ff0000" text-anchor="start" font-family="Liberation Sans, Noto Sans CJK SC, sans-serif">点</text>
<text x="83" y="389" font-size="11" fill="#ff0000" text-anchor="start" font-family="Liberation Sans, sans-serif" textLength="36.5" lengthAdjust="spacingAndGlyphs">8.68%</text>
<text x="67.5" y="520.3" font-size="12" fill="#333" text-anchor="end" font-family="Liberation Mono, monospace" textLength="53.5" lengthAdjust="spacingAndGlyphs">1951.2389</text>
<text x="67.5" y="544.3" font-size="12" fill="#333" text-anchor="end" font-family="Liberation Mono, monospace" textLength="53.5" lengthAdjust="spacingAndGlyphs">236918919</text>
<text x="67.5" y="560.3" font-size="12" fill="#333" text-anchor="end" font-family="Liberation Mono, monospace" textLength="53.5" lengthAdjust="spacingAndGlyphs">157945946</text>
<text x="67.5" y="576.3" font-size="12" fill="#333" text-anchor="end" font-family="Liberation Mono, monospace" textLength="47.5" lengthAdjust="spacingAndGlyphs">78972973</text>
<text x="67.5" y="614.3" font-size="12" fill="#333" text-anchor="end" font-family="Liberation Mono, monospace" textLength="29.5" lengthAdjust="spacingAndGlyphs">39.32</text>
<text x="67.5" y="632.3" font-size="12" fill="#333" text-anchor="end" font-family="Liberation Mono, monospace" textLength="29.5" lengthAdjust="spacingAndGlyphs">23.16</text>
<text x="67.5" y="650.3" font-size="12" fill="#333" text-anchor="end" font-family="Liberation Mono, monospace" textLength="23.5" lengthAdjust="spacingAndGlyphs">7.01</text>
<text x="67.5" y="668.3" font-size="12" fill="#333" text-anchor="end" font-family="Liberation Mono, monospace" textLength="29.5" lengthAdjust="spacingAndGlyphs">-9.15</text>
<text x="3" y="601.5" font-size="11.5" fill="#0000ff" text-anchor="start" font-family="Liberation Serif, serif" font-weight="bold" textLength="27" lengthAdjust="spacingAndGlyphs">MACD</text>
<text x="75" y="601.5" font-size="11" fill="#000" text-anchor="start" font-family="Liberation Sans, sans-serif" textLength="50" lengthAdjust="spacingAndGlyphs">DIF=12.69</text>
<text x="146" y="601.5" font-size="11" fill="#0000ff" text-anchor="start" font-family="Liberation Sans, sans-serif" textLength="55" lengthAdjust="spacingAndGlyphs">DEA=13.26</text>
<text x="217.5" y="601.5" font-size="11" fill="#ff00ff" text-anchor="start" font-family="Liberation Sans, sans-serif" textLength="61" lengthAdjust="spacingAndGlyphs">MACD=-1.13</text></svg>
</body></html>
